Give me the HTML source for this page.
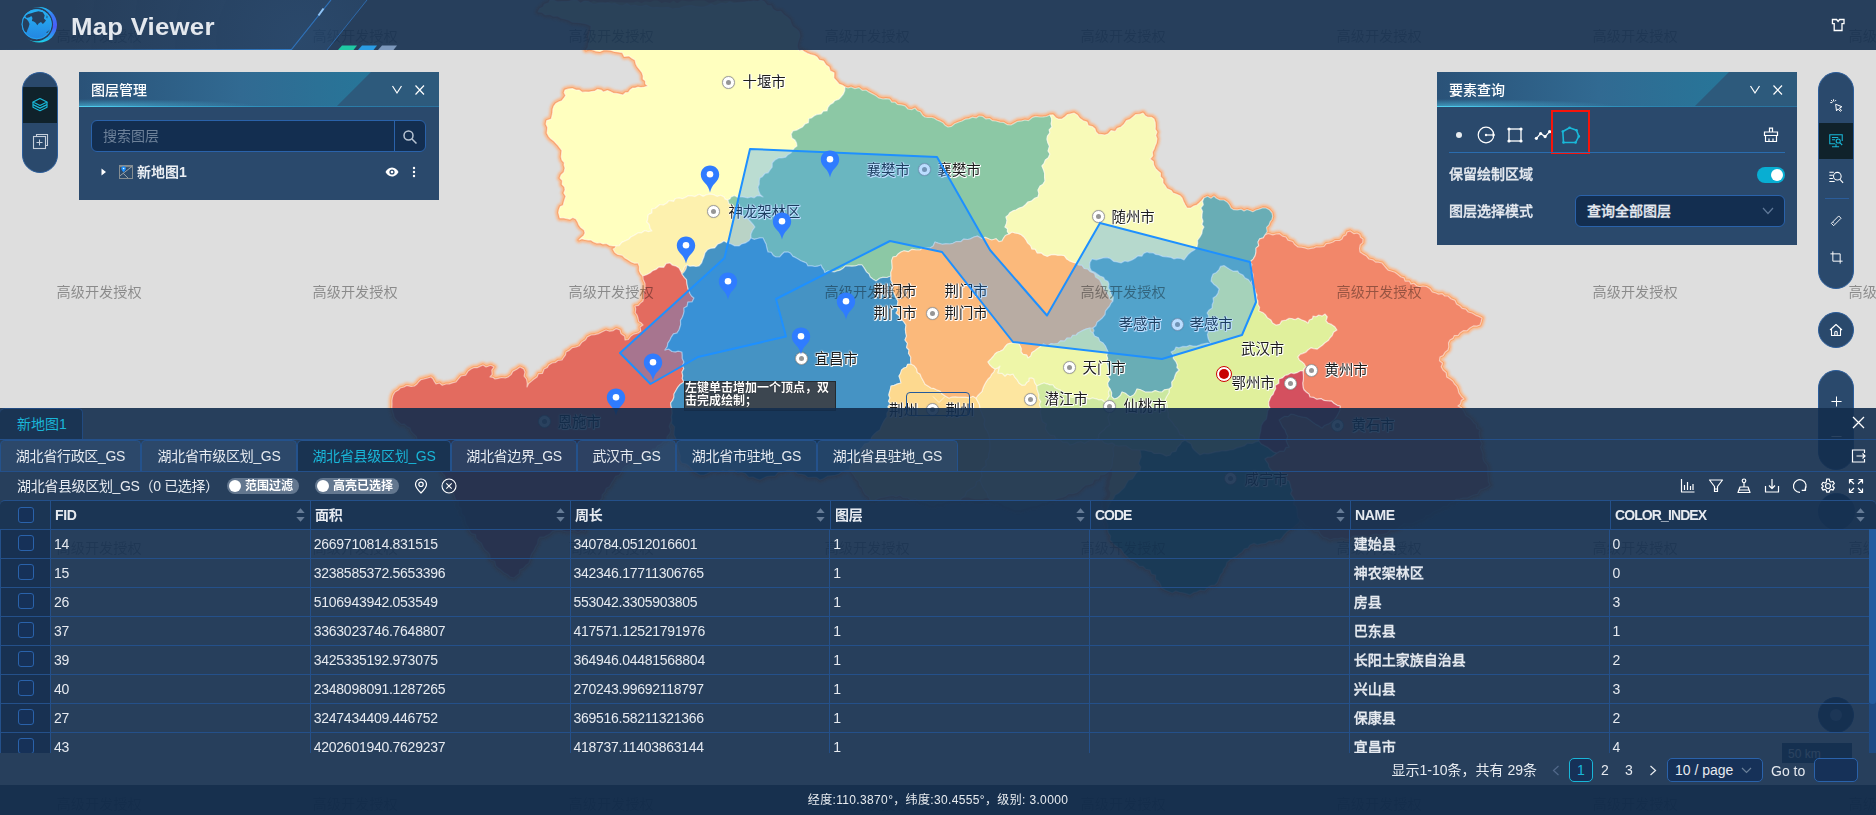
<!DOCTYPE html>
<html lang="zh-CN">
<head>
<meta charset="utf-8">
<title>Map Viewer</title>
<style>
*{box-sizing:border-box}
html,body{margin:0;padding:0}
body{width:1876px;height:815px;overflow:hidden;position:relative;background:#dedede;font-family:"Liberation Sans","Noto Sans CJK SC",sans-serif;font-size:14px;color:#e6eaf0}
svg{display:block}
.map{position:absolute;left:0;top:0}
.abs{position:absolute}
/* watermark */
.wm{position:absolute;font-size:14.2px;line-height:20px;height:20px;color:rgba(0,0,0,.38);white-space:nowrap;letter-spacing:0}
/* city labels */
.city{position:absolute;font-size:14.4px;line-height:18px;height:18px;color:#1c1c1c;white-space:nowrap;text-shadow:1px 1px 0 #fff,1px 0 0 #fff,0 1px 0 #fff,0 0 2px #fff,0 0 2px #fff}
.mk{position:absolute;width:13px;height:13px;border-radius:50%;border:1px solid #a2a2a2;background:#fff;box-shadow:0 0 1px rgba(0,0,0,.3)}
.mk:after{content:"";position:absolute;left:3px;top:3px;width:5px;height:5px;border-radius:50%;background:#969696}
/* header */
.hdr{position:absolute;left:0;top:0;width:1876px;height:50px;background:rgba(19,46,78,.9);overflow:hidden}
.title{position:absolute;left:71px;top:10px;font-size:24px;line-height:30px;font-weight:bold;color:#e4e8ee;white-space:nowrap;letter-spacing:.2px;transform:scaleX(1.075);transform-origin:0 0}
/* panels */
.panel{position:absolute;background:#2a496c}
.phead{position:absolute;left:0;top:0;width:100%;height:35px;overflow:hidden;background:linear-gradient(90deg,#2a5278 0%,#316a92 45%,#25789a 88%,#257c9c 100%)}
.phead .cut{position:absolute;left:257px;top:0;width:120px;height:35px;background:#2d5a7c;transform-origin:0 100%;}
.phead .ln{position:absolute;left:0;bottom:0;width:100%;height:1.5px;background:linear-gradient(90deg,#52d2f2 0%,#3aaad4 25%,#2b84b0 60%,#2a709c 100%)}
.phead .gw{position:absolute;left:0;bottom:1px;width:50%;height:7px;background:radial-gradient(ellipse at 12% 100%,rgba(80,205,240,.55),rgba(80,205,240,0) 70%)}
.phead .t{position:absolute;left:12px;top:8px;font-size:14px;line-height:20px;color:#fff;font-weight:500}
.pill{position:absolute;width:36px;border-radius:18px;background:#2a496c;border:1px solid #2b5d9a;overflow:hidden}
.act{position:absolute;left:0;width:36px;height:36px;background:#10222b}
.circ{position:absolute;width:36px;height:36px;border-radius:50%;background:#2a496c;border:1px solid #2b5d9a}
.b{font-weight:bold}
.m{font-weight:500;-webkit-text-stroke:.3px}
/* bottom */
.bot{position:absolute;left:0;top:408px;width:1876px;height:377px;background:rgba(19,46,78,.9)}
.hl{position:absolute;left:0;width:1876px;height:1px;background:#24508a}
.tab{position:absolute;top:440px;height:31px;border:1px solid #24528c;border-bottom:none;border-radius:5px 5px 0 0;background:rgba(52,88,128,.4);font-size:14px;line-height:30px;text-align:center;color:#e6eaf0;white-space:nowrap;letter-spacing:-.3px}
.tab.on{background:#193351;color:#19b6d8}
.sw{position:absolute;top:478px;height:16px;border-radius:8px;background:rgba(150,165,185,.55);font-size:12px;line-height:17px;font-weight:bold;color:#fff;padding-left:18px;white-space:nowrap}
.sw:before{content:"";position:absolute;left:2px;top:2px;width:12px;height:12px;border-radius:50%;background:#fff}
.th{position:absolute;top:500px;height:29px;font-weight:bold;line-height:31px;padding-left:5px;white-space:nowrap;letter-spacing:-.35px}
.td{position:absolute;height:29px;line-height:30px;padding-left:4px;white-space:nowrap;letter-spacing:-.27px}
.vl{position:absolute;top:500px;width:1px;height:253px;background:#24508a}
.cb{position:absolute;left:18px;width:16px;height:16px;border:1px solid #2a62aa;border-radius:3px;background:#163158}
.srt{position:absolute;top:507.5px;width:9px;height:14px}
.stat{position:absolute;left:0;top:785px;width:1876px;height:30px;background:rgba(16,41,73,.965);font-size:12px;line-height:30px;text-align:center;color:#e8ecf0;letter-spacing:.35px}
.ic{position:absolute}
</style>
</head>
<body>
<div id="root" style="position:absolute;left:0;top:0;width:1876px;height:815px;opacity:.999">
<svg class="map" width="1876" height="815" viewBox="0 0 1876 815">
<defs><filter id="gl" x="-5%" y="-5%" width="110%" height="110%"><feGaussianBlur stdDeviation="1.2"/></filter></defs>
<polygon points="550,0 548.7,2.8 544.2,4.4 543.1,7.0 539.7,8.6 538,12 541.9,12.3 545.4,15.0 550.0,14.5 553.4,16.3 557.5,16.1 560.8,18.1 565,19 569.0,20.2 572.3,22.2 576.5,22.4 579.7,22.7 584.1,23.5 587.4,24.2 591,26 590.7,29.0 589.6,33.3 588.5,36.5 589.5,39.8 588.6,42.9 588.0,47.3 586,50 589.3,48.9 593.5,50.1 596.2,51.1 600.0,51.4 603.5,50.0 606.9,50.0 610.5,50.2 614.4,51.4 618,52 622.3,52.6 624.3,56.5 628.9,55.9 632.0,58.3 635,60 636.0,64.1 637.3,66.6 640,70 642.1,72.7 643.1,75.9 643,79 645.4,80.9 645.5,83.9 648,86 644.4,87.0 641.0,87.6 638,87 635.5,87.9 632.7,88.1 630,90 628.4,92.4 625.4,92.7 623,95 619.4,94.0 616.2,93.4 613,93 610.0,91.5 607.4,90.5 603.3,92.0 601,90 597.4,89.4 595.0,91.1 591.7,91.6 589,92 585.2,91.9 582.2,92.2 579.1,90.1 576,90 572.4,88.6 568.5,88.9 565,90 564.1,92.6 565.8,95.6 564,98 561.8,100.8 559.1,101.7 555.9,103.5 554,106 552.9,109.1 552.7,112.4 552,116 551.2,119.1 546.7,120.6 546,124 547.6,127.3 547.4,130.1 547,133 548.9,136.5 550.7,138.6 554,141 556.2,143.4 558.0,145.3 560,148 561.9,150.4 561.5,154.3 561.2,156.8 562,160 564.3,162.6 564.0,165.1 565,168 564.0,172.2 561.1,174.9 560,178 562.4,180.5 562.1,184.4 564.6,186.9 565,190 563.8,192.9 565.9,196.3 565.0,198.7 564,202 563.2,205.4 560.3,206.6 559,210 558.6,212.7 559.2,215.2 560,218 562.9,217.7 566.7,218.6 569.9,219.2 572.7,217.5 576,219 577.9,222.2 579.0,225.0 580.9,227.6 584.2,229.9 585,233 583.7,235.8 581.4,237.6 579,240 581.8,238.7 584.6,239.4 588.3,240.1 591,240 593.4,241.7 597.0,243.1 600.2,242.8 603,244 606.3,243.6 609.8,245.6 613.0,246.0 616,246 614.8,248.2 613,249 615.0,252.4 617.9,254.4 622.3,255.3 625,258 627.7,259.6 631.4,261.9 634.6,263.2 638,263 639.4,266.6 639.3,270.4 640.7,273.6 643,276 643.1,279.3 645.0,283.6 645.1,287.5 644,291 643.5,294.0 643.5,297.7 643,301 640.4,303.1 638.4,305.4 635,306 635.7,309.0 635.2,312.7 637.0,315.0 638,318 638.7,321.5 640.8,322.7 643,325 640.1,327.0 640.7,331.2 638,333 633.9,334.1 630.9,336.0 628.3,339.5 625,340 624.7,336.2 620.9,333.4 620,330 616.3,328.6 613.2,330.6 609.7,331.2 606,330 602.3,331.7 598.5,333.6 594.6,334.6 591,335 587.2,336.9 585.6,339.8 581.8,342.2 579.2,345.8 576,347 572.2,347.7 569.2,350.4 566,352 565.5,354.8 563.7,357.3 562,360 558.2,360.3 555.3,362.5 552,363 548.8,364.9 547.3,367.5 544.1,369.0 542.4,373.5 538.5,373.6 537,377 533.7,379.3 531.6,381.1 528.6,383.5 527,387 527.3,383.5 526.5,379.1 524.1,376.1 525,372 523.7,368.9 520,367 516.8,369.3 512.8,371.4 511.1,374.6 508,377 505.3,378.0 501.7,377.5 498.2,378.3 495,379 492.9,377.3 490,377 492.2,374.4 491.8,370.1 494,367 490.8,365.3 486.1,367.0 483,365 480.4,366.1 477.1,367.7 473.8,367.7 471,369 468.2,371.0 465.6,375.1 460.9,376.0 458.6,378.7 456,382 453.1,382.6 449.3,383.9 446,384 442.3,385.3 439.5,383.0 436,384 434.3,381.4 432.9,378.7 431,377 427.8,378.0 424,379 420.8,379.7 418.6,381.8 417,384 414.4,386.0 411.1,386.4 406.6,385.4 404,387 400.2,388.0 398.4,390.1 395,392 393.2,394.9 392.3,397.9 391.9,400.7 392,404 391.8,407.4 392.4,411.0 393.4,413.7 394.1,417.0 396,420 398.8,422.3 401.3,424.4 404.3,424.2 407.3,426.9 410,428 410.9,431.2 413.2,433.7 416.4,436.6 417,440 419.1,443.3 422.6,445.5 425.1,448.9 428.1,451.5 430,455 432.9,457.8 433.3,461.5 436.8,463.9 436.7,467.6 440,470 442.2,473.0 444.9,475.9 445.7,479.3 448.5,481.6 449.9,484.8 449.8,489.0 453,492 454.0,495.2 455.6,499.5 458.4,501.9 458.1,506.1 461.1,509.0 461.4,513.8 464.5,516.6 464.9,520.1 465.8,523.8 468,527 469.2,530.7 471.5,533.7 475.4,534.7 476.2,539.1 479.2,541.4 481.4,543.2 483.2,547.3 485,550 487.9,552.2 489.9,555.0 490.2,559.8 494.7,561.2 495.6,565.7 498,568 501.2,570.2 503.9,572.7 507.7,574.7 509.8,576.9 514,578 516.3,575.9 519.3,573.7 519.8,569.8 523.3,568.3 525.9,565.3 528.7,563.4 530,560 530.8,555.8 531.9,553.4 534.2,550.2 535.8,546.5 537.7,543.7 538.0,540.0 540,537 544.1,537.1 547.3,535.4 550.2,533.7 552.4,531.4 556.2,530.4 560,530 563.2,531.0 566.5,531.8 570.1,531.6 574.6,530.6 577.9,532.5 581.5,530.4 585,532 586.1,528.9 589.4,526.0 590.1,523.0 592.3,519.5 592.6,516.6 593.7,512.4 596,510 597.5,507.2 598.1,503.7 599.4,501.0 602.0,498.3 602.2,494.8 605,492 606.3,488.3 609.6,486.8 611.8,482.6 613.6,480.0 615.7,476.3 619.2,475.4 621.7,471.5 622.9,468.6 626,466 629.7,464.2 632.8,460.9 636.9,460.0 640.2,459.2 643.1,456.0 647.1,455.4 650,452 652.7,449.1 655.6,448.9 657.7,445.8 661.1,444.4 663.1,441.8 667,441 667.0,436.9 669.6,434.0 670.9,430.6 669.2,426.5 670.2,423.8 672,420 671.5,423.4 674.6,426.8 674.1,431.5 674.0,435.1 675.8,438.6 676.9,441.6 677.2,444.9 678.2,449.5 679.2,452.7 680.2,455.7 680,460 681.9,463.1 686.5,464.1 688.7,465.7 691.7,468.8 693.5,471.4 696.5,473.1 700,475 704.4,474.9 707.1,473.8 711.2,471.9 714.5,471.1 718.7,472.0 722.7,470.7 726.1,471.7 730,470 734.3,470.7 737.7,473.2 741.3,472.4 745.2,473.5 749.0,477.4 752.9,477.0 756.0,478.6 760,480 763.7,478.0 766.9,476.6 770.8,476.1 775.1,476.1 778.1,472.6 782.2,472.2 786.5,470.7 790,470 793.7,470.6 797.4,473.8 801.2,474.3 805.0,475.2 808.0,477.6 813.0,477.4 816.6,477.4 820,480 823.4,478.8 827.5,476.2 831.3,475.8 835.3,475.3 838.8,474.2 841.8,471.9 846.3,470.2 850,470 852.1,473.0 854.1,475.5 856.1,479.1 858.8,481.3 859.6,485.4 862.1,487.6 863.7,491.8 865.5,494.6 869.0,496.7 870,500 874.1,500.7 878.0,498.4 881.0,497.5 884.9,497.0 888.4,496.1 892.9,495.5 896.1,496.7 900,495 903.2,497.6 907.9,498.0 910.5,499.7 915.6,498.9 919.1,501.8 922.1,501.8 926.7,503.1 930,505 934.0,505.3 937.1,503.2 941.8,504.0 944.5,501.9 948.4,500.7 952.2,500.3 955.9,500.4 960,500 964.3,499.2 968.0,499.0 971.2,499.9 975.2,500.7 978.8,500.7 983.0,500.8 986.4,499.4 990,500 994.1,501.7 998.0,502.0 1000.9,502.9 1004.9,506.0 1008.3,506.8 1012.3,508.7 1016.2,510.0 1020,510 1023.8,508.5 1027.7,507.6 1030.7,506.1 1035.7,505.9 1039.3,504.4 1042.0,502.7 1046.6,502.5 1050,500 1053.9,499.9 1057.6,498.3 1061.9,497.5 1065.8,495.9 1068.3,493.7 1072.9,493.7 1077.1,492.4 1080,490 1083.0,487.0 1085.5,485.1 1089.2,484.5 1092.6,483.1 1094.0,479.2 1098.8,478.8 1100.0,475.0 1104.3,474.6 1107.5,472.2 1110,470 1110.6,474.1 1109.6,477.6 1108.1,480.9 1108.1,484.6 1106.7,488.6 1108.8,492.9 1108.4,496.3 1106.0,499.7 1104.8,503.6 1105.4,507.6 1106.6,511.8 1105,515 1104.9,518.6 1106.6,522.4 1108.0,525.6 1107.6,529.1 1108.3,532.8 1110.6,536.0 1110,540 1112.6,542.5 1114.5,544.9 1117.6,546.9 1121.0,549.0 1122.8,551.6 1125.0,554.8 1127.8,557.5 1130,560 1133.9,561.6 1136.7,563.5 1139.5,566.4 1143.0,566.3 1145.9,569.3 1150,570 1151.4,574.0 1155.5,575.2 1155.5,579.4 1158.4,581.1 1160.4,584.4 1161.6,587.9 1165,590 1168.9,591.5 1172.3,593.0 1175.7,590.9 1179.3,592.3 1182.8,592.8 1186.9,593.9 1190,595 1193.4,592.7 1196.7,591.9 1200.2,590.1 1204.6,590.8 1207.9,587.3 1211.1,585.5 1215,585 1217.4,582.5 1218.8,579.3 1220.4,575.0 1222.9,572.2 1223.4,569.3 1225.9,566.3 1227.0,562.4 1230,560 1232.9,558.1 1236.2,556.6 1239.1,554.1 1241.9,552.3 1244.4,548.8 1247.9,548.2 1250,545 1254.0,543.4 1257.2,544.9 1261.3,543.8 1265.3,543.4 1269.2,541.0 1272.7,541.6 1276.1,539.6 1280,540 1282.1,537.7 1284.3,534.6 1287.1,531.7 1289.5,529.9 1292.7,528.2 1295.1,525.8 1298.7,523.1 1300,520 1302.9,522.0 1304.8,525.0 1308.4,527.0 1312.2,528.2 1314.4,531.1 1318.5,530.8 1320.7,534.7 1323.4,537.3 1326.8,538.1 1330,540 1333.7,538.7 1338.0,538.9 1342.0,537.9 1345.6,539.1 1349.7,539.1 1353.1,536.3 1357.1,535.9 1360.2,536.5 1364.3,535.5 1368.2,537.6 1372.2,534.9 1376.2,534.1 1380,535 1383.4,534.5 1387.4,533.2 1390.4,529.8 1394.4,530.0 1398.1,528.5 1401.1,526.0 1404.2,523.7 1408.2,524.0 1412.7,523.5 1416.1,521.6 1419.4,520.4 1423.8,518.8 1426.2,515.7 1430,515 1432.6,512.4 1436.1,510.7 1440.4,509.4 1443.2,506.5 1447.1,506.7 1449.7,503.0 1453.2,502.3 1456.2,499.4 1460,499 1463.6,498.2 1467.8,498.1 1471.0,496.3 1474,495 1477.5,494.4 1480.2,490.0 1483.8,488.8 1487.2,487.4 1490,485 1488.3,481.4 1488.4,478.4 1487.8,474.2 1488,471 1487.9,467.2 1486.8,464.6 1484.0,461.4 1482.9,458.0 1483.0,453.9 1482,451 1480.5,447.2 1482.1,443.7 1480.4,440.5 1479.8,437.3 1479.1,433.1 1480,430 1476.7,428.1 1476.2,424.5 1473.7,422.7 1472,420 1469.1,417.4 1465.8,415.2 1463.7,410.8 1461.4,407.7 1458,406 1460.5,404.0 1461.3,400.4 1464,399 1461.4,396.5 1458.9,392.9 1458,389 1456.7,386.1 1454.3,383.8 1452.9,381.2 1450,379 1446.7,376.9 1446.2,372.7 1443,370 1441.2,366.7 1442.6,363.2 1439.5,360.7 1440,357 1443.1,355.6 1445.1,352.2 1448,350 1448.8,347.0 1448.5,342.9 1450,340 1453.0,338.4 1454.4,335.6 1458.0,335.7 1460,333 1463.4,330.7 1467.1,330.8 1470,328 1473.5,325.9 1476.8,326.1 1480,325 1481.1,321.9 1482,318 1478.9,316.4 1475.5,315.1 1472,313 1468.3,312.0 1465.8,309.1 1462.1,308.3 1460,306 1456.6,303.9 1455.0,300.4 1450.9,298.7 1448,296 1444.9,296.0 1442.3,293.7 1438.5,294.1 1436,293 1432.3,291.9 1429.7,288.4 1426.4,286.5 1423,286 1419.7,286.6 1416.7,285.7 1414.0,283.2 1411,284 1409.3,281.0 1405.1,281.1 1404.0,277.8 1401,277 1397.6,274.2 1394.9,272.2 1391,271 1388.1,270.2 1386.2,268.0 1384.0,265.4 1382,263 1378.2,262.1 1375.6,262.1 1372.8,259.8 1369,259 1366.1,255.7 1363.1,254.1 1360,252 1359.6,248.6 1360.2,244.9 1362.8,242.6 1363,239 1360.5,237.3 1359.8,234.6 1357,233 1354.0,233.7 1350.1,231.0 1347,232 1346.0,234.9 1343.4,236.1 1342,239 1339.6,240.5 1335.3,240.5 1333,242 1329.5,243.2 1326.2,243.6 1323.9,246.5 1320,247 1316.4,246.8 1314.2,247.8 1310.9,248.3 1308,249 1304.9,247.9 1301.3,247.2 1298,247 1294.5,244.3 1292.7,241.5 1288.0,240.1 1286,237 1282.5,236.1 1279.5,233.7 1276,234 1272.9,234.9 1268.2,233.5 1265,235 1267.2,231.5 1266.6,227.4 1269,225 1270.1,221.9 1271.9,219.5 1272.7,216.3 1272,213 1269.3,209.7 1266,208 1262.9,207.8 1259.1,209.1 1256,210 1252.8,211.7 1250.5,210.8 1247.0,209.5 1244,211 1241.3,209.2 1237.3,209.9 1233.7,209.7 1231,208 1229.3,204.6 1227.4,202.2 1224,200 1219.9,200.0 1216.4,198.3 1214,196 1210.9,198.2 1207.5,196.3 1204,198 1201.7,200.6 1199.3,203.0 1197,205 1193.9,206.0 1190.8,208.1 1187,208 1184.9,204.5 1183.4,201.4 1182,198 1179.9,195.7 1176.6,194.2 1173,193 1171.2,190.5 1166.8,188.5 1165.5,186.2 1163,183 1163.0,179.3 1160.4,176.8 1160.5,173.1 1158,171 1155.6,168.6 1153.7,165.1 1153.3,161.4 1150,159 1152.8,155.8 1152.3,152.1 1153.9,149.3 1155,146 1156.3,143.0 1157.0,138.7 1155.7,135.5 1157,132 1155.2,129.3 1155.4,125.9 1155.2,122.5 1154,119 1151.5,117.3 1147.7,117.2 1145.1,115.7 1143,113 1139.9,114.2 1135.8,114.5 1133,117 1129.9,119.4 1126.5,120.5 1123.8,124.5 1121,127 1117.4,128.2 1115.3,131.4 1111.1,130.6 1108.2,133.8 1105,135 1101.7,134.5 1098.3,134.2 1096,132 1094.9,128.7 1092.2,126.5 1088.3,125.6 1087,122 1083.1,120.8 1079.6,118.3 1077.5,115.3 1074,113 1070.4,113.9 1067.6,114.5 1065.2,116.7 1062,119 1058.3,119.1 1055.7,117.7 1053.0,114.8 1050,115 1046.4,116.5 1043.3,116.8 1040,117 1035.8,116.4 1032.7,117.3 1028.5,120.6 1025,120 1021.8,120.8 1017.7,121.3 1013.9,123.4 1011,125 1007.4,124.7 1003.4,122.3 1000.1,122.2 996,121 992.5,120.7 989.5,118.5 986.0,118.9 982.3,116.3 979,116 976.2,117.9 972.4,117.1 969.1,118.6 965.1,119.2 962,121 958.9,122.0 954.6,123.8 951.5,126.4 948,127 945.0,125.2 943.0,122.8 940.5,121.4 937,120 934.3,118.2 931.7,117.4 927.8,117.4 925,117 922.6,115.2 920.4,111.8 917.3,110.7 915,108 911.8,109.6 908,109 905.1,105.8 901.3,104.8 897.4,104.4 895,102 891.8,102.1 889.7,99.1 885.9,98.6 883,99 878.7,97.9 875.6,95.5 872.5,93.9 868.8,91.9 866,90 862.3,90.3 859.0,87.6 854.9,88.6 851,87 848.1,88.0 845,87 842.5,85.3 839,84 836.1,80.5 833.9,78.1 834.1,72.7 830.2,70.9 829,67 826.0,65.1 823.4,61.0 819.1,60.1 817,57 814.1,55.4 810.4,54.6 807.4,53.4 804.6,51.9 802,50 799.4,50.7 798,49 797.2,45.9 798.0,42.0 799.1,38.8 800,36 799.1,32.0 797.0,29.5 792.6,26.4 791.3,23.8 790.1,19.9 787,17 784.0,15.0 780.8,11.3 776.7,11.5 772.9,9.2 771.2,5.7 767.3,5.5 764.2,1.6 761,0 756.8,-0.6 752.5,1.3 748.6,-1.4 744.9,1.0 741.3,-0.1 737.0,0.4 732.9,-0.1 729.0,-1.0 725.1,-0.5 721.7,0.0 717.7,-1.4 713.5,0.5 709.5,1.3 704.8,-1.1 701.3,-1.0 697.5,-1.3 693.5,-0.8 689.7,-0.1 685.4,-0.6 681.9,-1.2 677.2,1.5 673.7,-1.2 669.5,1.4 665.1,0.3 661.9,1.4 658.0,-1.0 654.1,-1.1 649.8,0.6 645.1,-0.3 641.5,1.5 637.4,-0.3 633.7,0.9 630.0,1.1 625.5,1.0 621.7,0.8 617.5,0.7 613.6,0.3 609.6,-0.2 605.9,1.4 602.1,-0.1 597.4,0.6 593.3,-1.1 590.1,1.1 585.4,-1.2 582.0,1.2 578.1,1.3 573.5,-0.3 569.8,1.1 566.4,1.3 561.4,0.9 557.4,0.0 554.2,-0.1" fill="#fdd98f" stroke="#fbb88a" stroke-width="6.5" stroke-linejoin="round" filter="url(#gl)"/>
<polygon points="550,0 548.7,2.8 544.2,4.4 543.1,7.0 539.7,8.6 538,12 541.9,12.3 545.4,15.0 550.0,14.5 553.4,16.3 557.5,16.1 560.8,18.1 565,19 569.0,20.2 572.3,22.2 576.5,22.4 579.7,22.7 584.1,23.5 587.4,24.2 591,26 590.7,29.0 589.6,33.3 588.5,36.5 589.5,39.8 588.6,42.9 588.0,47.3 586,50 589.3,48.9 593.5,50.1 596.2,51.1 600.0,51.4 603.5,50.0 606.9,50.0 610.5,50.2 614.4,51.4 618,52 622.3,52.6 624.3,56.5 628.9,55.9 632.0,58.3 635,60 636.0,64.1 637.3,66.6 640,70 642.1,72.7 643.1,75.9 643,79 645.4,80.9 645.5,83.9 648,86 644.4,87.0 641.0,87.6 638,87 635.5,87.9 632.7,88.1 630,90 628.4,92.4 625.4,92.7 623,95 619.4,94.0 616.2,93.4 613,93 610.0,91.5 607.4,90.5 603.3,92.0 601,90 597.4,89.4 595.0,91.1 591.7,91.6 589,92 585.2,91.9 582.2,92.2 579.1,90.1 576,90 572.4,88.6 568.5,88.9 565,90 564.1,92.6 565.8,95.6 564,98 561.8,100.8 559.1,101.7 555.9,103.5 554,106 552.9,109.1 552.7,112.4 552,116 551.2,119.1 546.7,120.6 546,124 547.6,127.3 547.4,130.1 547,133 548.9,136.5 550.7,138.6 554,141 556.2,143.4 558.0,145.3 560,148 561.9,150.4 561.5,154.3 561.2,156.8 562,160 564.3,162.6 564.0,165.1 565,168 564.0,172.2 561.1,174.9 560,178 562.4,180.5 562.1,184.4 564.6,186.9 565,190 563.8,192.9 565.9,196.3 565.0,198.7 564,202 563.2,205.4 560.3,206.6 559,210 558.6,212.7 559.2,215.2 560,218 562.9,217.7 566.7,218.6 569.9,219.2 572.7,217.5 576,219 577.9,222.2 579.0,225.0 580.9,227.6 584.2,229.9 585,233 583.7,235.8 581.4,237.6 579,240 581.8,238.7 584.6,239.4 588.3,240.1 591,240 593.4,241.7 597.0,243.1 600.2,242.8 603,244 606.3,243.6 609.8,245.6 613.0,246.0 616,246 614.8,248.2 613,249 615.0,252.4 617.9,254.4 622.3,255.3 625,258 627.7,259.6 631.4,261.9 634.6,263.2 638,263 639.4,266.6 639.3,270.4 640.7,273.6 643,276 643.1,279.3 645.0,283.6 645.1,287.5 644,291 643.5,294.0 643.5,297.7 643,301 640.4,303.1 638.4,305.4 635,306 635.7,309.0 635.2,312.7 637.0,315.0 638,318 638.7,321.5 640.8,322.7 643,325 640.1,327.0 640.7,331.2 638,333 633.9,334.1 630.9,336.0 628.3,339.5 625,340 624.7,336.2 620.9,333.4 620,330 616.3,328.6 613.2,330.6 609.7,331.2 606,330 602.3,331.7 598.5,333.6 594.6,334.6 591,335 587.2,336.9 585.6,339.8 581.8,342.2 579.2,345.8 576,347 572.2,347.7 569.2,350.4 566,352 565.5,354.8 563.7,357.3 562,360 558.2,360.3 555.3,362.5 552,363 548.8,364.9 547.3,367.5 544.1,369.0 542.4,373.5 538.5,373.6 537,377 533.7,379.3 531.6,381.1 528.6,383.5 527,387 527.3,383.5 526.5,379.1 524.1,376.1 525,372 523.7,368.9 520,367 516.8,369.3 512.8,371.4 511.1,374.6 508,377 505.3,378.0 501.7,377.5 498.2,378.3 495,379 492.9,377.3 490,377 492.2,374.4 491.8,370.1 494,367 490.8,365.3 486.1,367.0 483,365 480.4,366.1 477.1,367.7 473.8,367.7 471,369 468.2,371.0 465.6,375.1 460.9,376.0 458.6,378.7 456,382 453.1,382.6 449.3,383.9 446,384 442.3,385.3 439.5,383.0 436,384 434.3,381.4 432.9,378.7 431,377 427.8,378.0 424,379 420.8,379.7 418.6,381.8 417,384 414.4,386.0 411.1,386.4 406.6,385.4 404,387 400.2,388.0 398.4,390.1 395,392 393.2,394.9 392.3,397.9 391.9,400.7 392,404 391.8,407.4 392.4,411.0 393.4,413.7 394.1,417.0 396,420 398.8,422.3 401.3,424.4 404.3,424.2 407.3,426.9 410,428 410.9,431.2 413.2,433.7 416.4,436.6 417,440 419.1,443.3 422.6,445.5 425.1,448.9 428.1,451.5 430,455 432.9,457.8 433.3,461.5 436.8,463.9 436.7,467.6 440,470 442.2,473.0 444.9,475.9 445.7,479.3 448.5,481.6 449.9,484.8 449.8,489.0 453,492 454.0,495.2 455.6,499.5 458.4,501.9 458.1,506.1 461.1,509.0 461.4,513.8 464.5,516.6 464.9,520.1 465.8,523.8 468,527 469.2,530.7 471.5,533.7 475.4,534.7 476.2,539.1 479.2,541.4 481.4,543.2 483.2,547.3 485,550 487.9,552.2 489.9,555.0 490.2,559.8 494.7,561.2 495.6,565.7 498,568 501.2,570.2 503.9,572.7 507.7,574.7 509.8,576.9 514,578 516.3,575.9 519.3,573.7 519.8,569.8 523.3,568.3 525.9,565.3 528.7,563.4 530,560 530.8,555.8 531.9,553.4 534.2,550.2 535.8,546.5 537.7,543.7 538.0,540.0 540,537 544.1,537.1 547.3,535.4 550.2,533.7 552.4,531.4 556.2,530.4 560,530 563.2,531.0 566.5,531.8 570.1,531.6 574.6,530.6 577.9,532.5 581.5,530.4 585,532 586.1,528.9 589.4,526.0 590.1,523.0 592.3,519.5 592.6,516.6 593.7,512.4 596,510 597.5,507.2 598.1,503.7 599.4,501.0 602.0,498.3 602.2,494.8 605,492 606.3,488.3 609.6,486.8 611.8,482.6 613.6,480.0 615.7,476.3 619.2,475.4 621.7,471.5 622.9,468.6 626,466 629.7,464.2 632.8,460.9 636.9,460.0 640.2,459.2 643.1,456.0 647.1,455.4 650,452 652.7,449.1 655.6,448.9 657.7,445.8 661.1,444.4 663.1,441.8 667,441 667.0,436.9 669.6,434.0 670.9,430.6 669.2,426.5 670.2,423.8 672,420 671.5,423.4 674.6,426.8 674.1,431.5 674.0,435.1 675.8,438.6 676.9,441.6 677.2,444.9 678.2,449.5 679.2,452.7 680.2,455.7 680,460 681.9,463.1 686.5,464.1 688.7,465.7 691.7,468.8 693.5,471.4 696.5,473.1 700,475 704.4,474.9 707.1,473.8 711.2,471.9 714.5,471.1 718.7,472.0 722.7,470.7 726.1,471.7 730,470 734.3,470.7 737.7,473.2 741.3,472.4 745.2,473.5 749.0,477.4 752.9,477.0 756.0,478.6 760,480 763.7,478.0 766.9,476.6 770.8,476.1 775.1,476.1 778.1,472.6 782.2,472.2 786.5,470.7 790,470 793.7,470.6 797.4,473.8 801.2,474.3 805.0,475.2 808.0,477.6 813.0,477.4 816.6,477.4 820,480 823.4,478.8 827.5,476.2 831.3,475.8 835.3,475.3 838.8,474.2 841.8,471.9 846.3,470.2 850,470 852.1,473.0 854.1,475.5 856.1,479.1 858.8,481.3 859.6,485.4 862.1,487.6 863.7,491.8 865.5,494.6 869.0,496.7 870,500 874.1,500.7 878.0,498.4 881.0,497.5 884.9,497.0 888.4,496.1 892.9,495.5 896.1,496.7 900,495 903.2,497.6 907.9,498.0 910.5,499.7 915.6,498.9 919.1,501.8 922.1,501.8 926.7,503.1 930,505 934.0,505.3 937.1,503.2 941.8,504.0 944.5,501.9 948.4,500.7 952.2,500.3 955.9,500.4 960,500 964.3,499.2 968.0,499.0 971.2,499.9 975.2,500.7 978.8,500.7 983.0,500.8 986.4,499.4 990,500 994.1,501.7 998.0,502.0 1000.9,502.9 1004.9,506.0 1008.3,506.8 1012.3,508.7 1016.2,510.0 1020,510 1023.8,508.5 1027.7,507.6 1030.7,506.1 1035.7,505.9 1039.3,504.4 1042.0,502.7 1046.6,502.5 1050,500 1053.9,499.9 1057.6,498.3 1061.9,497.5 1065.8,495.9 1068.3,493.7 1072.9,493.7 1077.1,492.4 1080,490 1083.0,487.0 1085.5,485.1 1089.2,484.5 1092.6,483.1 1094.0,479.2 1098.8,478.8 1100.0,475.0 1104.3,474.6 1107.5,472.2 1110,470 1110.6,474.1 1109.6,477.6 1108.1,480.9 1108.1,484.6 1106.7,488.6 1108.8,492.9 1108.4,496.3 1106.0,499.7 1104.8,503.6 1105.4,507.6 1106.6,511.8 1105,515 1104.9,518.6 1106.6,522.4 1108.0,525.6 1107.6,529.1 1108.3,532.8 1110.6,536.0 1110,540 1112.6,542.5 1114.5,544.9 1117.6,546.9 1121.0,549.0 1122.8,551.6 1125.0,554.8 1127.8,557.5 1130,560 1133.9,561.6 1136.7,563.5 1139.5,566.4 1143.0,566.3 1145.9,569.3 1150,570 1151.4,574.0 1155.5,575.2 1155.5,579.4 1158.4,581.1 1160.4,584.4 1161.6,587.9 1165,590 1168.9,591.5 1172.3,593.0 1175.7,590.9 1179.3,592.3 1182.8,592.8 1186.9,593.9 1190,595 1193.4,592.7 1196.7,591.9 1200.2,590.1 1204.6,590.8 1207.9,587.3 1211.1,585.5 1215,585 1217.4,582.5 1218.8,579.3 1220.4,575.0 1222.9,572.2 1223.4,569.3 1225.9,566.3 1227.0,562.4 1230,560 1232.9,558.1 1236.2,556.6 1239.1,554.1 1241.9,552.3 1244.4,548.8 1247.9,548.2 1250,545 1254.0,543.4 1257.2,544.9 1261.3,543.8 1265.3,543.4 1269.2,541.0 1272.7,541.6 1276.1,539.6 1280,540 1282.1,537.7 1284.3,534.6 1287.1,531.7 1289.5,529.9 1292.7,528.2 1295.1,525.8 1298.7,523.1 1300,520 1302.9,522.0 1304.8,525.0 1308.4,527.0 1312.2,528.2 1314.4,531.1 1318.5,530.8 1320.7,534.7 1323.4,537.3 1326.8,538.1 1330,540 1333.7,538.7 1338.0,538.9 1342.0,537.9 1345.6,539.1 1349.7,539.1 1353.1,536.3 1357.1,535.9 1360.2,536.5 1364.3,535.5 1368.2,537.6 1372.2,534.9 1376.2,534.1 1380,535 1383.4,534.5 1387.4,533.2 1390.4,529.8 1394.4,530.0 1398.1,528.5 1401.1,526.0 1404.2,523.7 1408.2,524.0 1412.7,523.5 1416.1,521.6 1419.4,520.4 1423.8,518.8 1426.2,515.7 1430,515 1432.6,512.4 1436.1,510.7 1440.4,509.4 1443.2,506.5 1447.1,506.7 1449.7,503.0 1453.2,502.3 1456.2,499.4 1460,499 1463.6,498.2 1467.8,498.1 1471.0,496.3 1474,495 1477.5,494.4 1480.2,490.0 1483.8,488.8 1487.2,487.4 1490,485 1488.3,481.4 1488.4,478.4 1487.8,474.2 1488,471 1487.9,467.2 1486.8,464.6 1484.0,461.4 1482.9,458.0 1483.0,453.9 1482,451 1480.5,447.2 1482.1,443.7 1480.4,440.5 1479.8,437.3 1479.1,433.1 1480,430 1476.7,428.1 1476.2,424.5 1473.7,422.7 1472,420 1469.1,417.4 1465.8,415.2 1463.7,410.8 1461.4,407.7 1458,406 1460.5,404.0 1461.3,400.4 1464,399 1461.4,396.5 1458.9,392.9 1458,389 1456.7,386.1 1454.3,383.8 1452.9,381.2 1450,379 1446.7,376.9 1446.2,372.7 1443,370 1441.2,366.7 1442.6,363.2 1439.5,360.7 1440,357 1443.1,355.6 1445.1,352.2 1448,350 1448.8,347.0 1448.5,342.9 1450,340 1453.0,338.4 1454.4,335.6 1458.0,335.7 1460,333 1463.4,330.7 1467.1,330.8 1470,328 1473.5,325.9 1476.8,326.1 1480,325 1481.1,321.9 1482,318 1478.9,316.4 1475.5,315.1 1472,313 1468.3,312.0 1465.8,309.1 1462.1,308.3 1460,306 1456.6,303.9 1455.0,300.4 1450.9,298.7 1448,296 1444.9,296.0 1442.3,293.7 1438.5,294.1 1436,293 1432.3,291.9 1429.7,288.4 1426.4,286.5 1423,286 1419.7,286.6 1416.7,285.7 1414.0,283.2 1411,284 1409.3,281.0 1405.1,281.1 1404.0,277.8 1401,277 1397.6,274.2 1394.9,272.2 1391,271 1388.1,270.2 1386.2,268.0 1384.0,265.4 1382,263 1378.2,262.1 1375.6,262.1 1372.8,259.8 1369,259 1366.1,255.7 1363.1,254.1 1360,252 1359.6,248.6 1360.2,244.9 1362.8,242.6 1363,239 1360.5,237.3 1359.8,234.6 1357,233 1354.0,233.7 1350.1,231.0 1347,232 1346.0,234.9 1343.4,236.1 1342,239 1339.6,240.5 1335.3,240.5 1333,242 1329.5,243.2 1326.2,243.6 1323.9,246.5 1320,247 1316.4,246.8 1314.2,247.8 1310.9,248.3 1308,249 1304.9,247.9 1301.3,247.2 1298,247 1294.5,244.3 1292.7,241.5 1288.0,240.1 1286,237 1282.5,236.1 1279.5,233.7 1276,234 1272.9,234.9 1268.2,233.5 1265,235 1267.2,231.5 1266.6,227.4 1269,225 1270.1,221.9 1271.9,219.5 1272.7,216.3 1272,213 1269.3,209.7 1266,208 1262.9,207.8 1259.1,209.1 1256,210 1252.8,211.7 1250.5,210.8 1247.0,209.5 1244,211 1241.3,209.2 1237.3,209.9 1233.7,209.7 1231,208 1229.3,204.6 1227.4,202.2 1224,200 1219.9,200.0 1216.4,198.3 1214,196 1210.9,198.2 1207.5,196.3 1204,198 1201.7,200.6 1199.3,203.0 1197,205 1193.9,206.0 1190.8,208.1 1187,208 1184.9,204.5 1183.4,201.4 1182,198 1179.9,195.7 1176.6,194.2 1173,193 1171.2,190.5 1166.8,188.5 1165.5,186.2 1163,183 1163.0,179.3 1160.4,176.8 1160.5,173.1 1158,171 1155.6,168.6 1153.7,165.1 1153.3,161.4 1150,159 1152.8,155.8 1152.3,152.1 1153.9,149.3 1155,146 1156.3,143.0 1157.0,138.7 1155.7,135.5 1157,132 1155.2,129.3 1155.4,125.9 1155.2,122.5 1154,119 1151.5,117.3 1147.7,117.2 1145.1,115.7 1143,113 1139.9,114.2 1135.8,114.5 1133,117 1129.9,119.4 1126.5,120.5 1123.8,124.5 1121,127 1117.4,128.2 1115.3,131.4 1111.1,130.6 1108.2,133.8 1105,135 1101.7,134.5 1098.3,134.2 1096,132 1094.9,128.7 1092.2,126.5 1088.3,125.6 1087,122 1083.1,120.8 1079.6,118.3 1077.5,115.3 1074,113 1070.4,113.9 1067.6,114.5 1065.2,116.7 1062,119 1058.3,119.1 1055.7,117.7 1053.0,114.8 1050,115 1046.4,116.5 1043.3,116.8 1040,117 1035.8,116.4 1032.7,117.3 1028.5,120.6 1025,120 1021.8,120.8 1017.7,121.3 1013.9,123.4 1011,125 1007.4,124.7 1003.4,122.3 1000.1,122.2 996,121 992.5,120.7 989.5,118.5 986.0,118.9 982.3,116.3 979,116 976.2,117.9 972.4,117.1 969.1,118.6 965.1,119.2 962,121 958.9,122.0 954.6,123.8 951.5,126.4 948,127 945.0,125.2 943.0,122.8 940.5,121.4 937,120 934.3,118.2 931.7,117.4 927.8,117.4 925,117 922.6,115.2 920.4,111.8 917.3,110.7 915,108 911.8,109.6 908,109 905.1,105.8 901.3,104.8 897.4,104.4 895,102 891.8,102.1 889.7,99.1 885.9,98.6 883,99 878.7,97.9 875.6,95.5 872.5,93.9 868.8,91.9 866,90 862.3,90.3 859.0,87.6 854.9,88.6 851,87 848.1,88.0 845,87 842.5,85.3 839,84 836.1,80.5 833.9,78.1 834.1,72.7 830.2,70.9 829,67 826.0,65.1 823.4,61.0 819.1,60.1 817,57 814.1,55.4 810.4,54.6 807.4,53.4 804.6,51.9 802,50 799.4,50.7 798,49 797.2,45.9 798.0,42.0 799.1,38.8 800,36 799.1,32.0 797.0,29.5 792.6,26.4 791.3,23.8 790.1,19.9 787,17 784.0,15.0 780.8,11.3 776.7,11.5 772.9,9.2 771.2,5.7 767.3,5.5 764.2,1.6 761,0 756.8,-0.6 752.5,1.3 748.6,-1.4 744.9,1.0 741.3,-0.1 737.0,0.4 732.9,-0.1 729.0,-1.0 725.1,-0.5 721.7,0.0 717.7,-1.4 713.5,0.5 709.5,1.3 704.8,-1.1 701.3,-1.0 697.5,-1.3 693.5,-0.8 689.7,-0.1 685.4,-0.6 681.9,-1.2 677.2,1.5 673.7,-1.2 669.5,1.4 665.1,0.3 661.9,1.4 658.0,-1.0 654.1,-1.1 649.8,0.6 645.1,-0.3 641.5,1.5 637.4,-0.3 633.7,0.9 630.0,1.1 625.5,1.0 621.7,0.8 617.5,0.7 613.6,0.3 609.6,-0.2 605.9,1.4 602.1,-0.1 597.4,0.6 593.3,-1.1 590.1,1.1 585.4,-1.2 582.0,1.2 578.1,1.3 573.5,-0.3 569.8,1.1 566.4,1.3 561.4,0.9 557.4,0.0 554.2,-0.1" fill="#fdd98f" stroke="#f8a26a" stroke-width="3" stroke-linejoin="round"/>
<polygon points="550,0 554.0,0.3 557.3,1.9 561.3,1.6 565.2,1.5 568.7,1.3 573.3,-0.0 577.5,0.6 580.4,3.2 584.2,1.1 588.2,1.3 592.5,4.0 596.1,3.9 600,3 603.5,3.2 607.6,2.7 611.7,4.0 614.7,3.3 619.4,5.5 622.8,5.8 626.8,3.5 630.6,6.1 634.2,5.0 638.4,6.3 642.1,6.4 646.0,5.0 649.9,7.1 652.7,7.8 656.8,7.3 660.5,7.8 664.6,7.7 668.2,7.4 672.8,9.0 675.9,8.3 680,8 683.4,6.7 688.0,5.9 691.4,5.5 695.5,6.5 699.7,7.1 703.8,7.0 707.5,5.9 711.3,3.9 714.8,6.0 718.5,4.2 721.9,3.2 726.1,4.0 729.5,1.9 734.2,3.5 738.0,2.9 741.9,2.5 745.9,1.8 749.9,1.8 753.7,0.9 757.4,1.7 761,0 764.2,1.6 767.3,5.5 771.2,5.7 772.9,9.2 776.7,11.5 780.8,11.3 784.0,15.0 787,17 790.1,19.9 791.3,23.8 792.6,26.4 797.0,29.5 799.1,32.0 800,36 799.1,38.8 798.0,42.0 797.2,45.9 798,49 799.4,50.7 802,50 804.6,51.9 807.4,53.4 810.4,54.6 814.1,55.4 817,57 819.1,60.1 823.4,61.0 826.0,65.1 829,67 830.2,70.9 834.1,72.7 833.9,78.1 836.1,80.5 839,84 842.5,85.3 845,87 844.8,90.7 843.3,94.2 841,97 839.0,99.2 834.9,100.7 833,103 829.9,104.8 828.0,107.4 827,111 823.3,111.2 821.2,114.0 816.7,114.6 814,116 811.5,118.0 808.9,118.6 808.4,122.8 805,124 802.6,126.9 799.6,128.6 796.9,130.1 793,131 791.2,134.1 792,138 794.9,139.9 796.5,142.9 797,146 794.3,148.1 792.7,150.5 791,153 787.6,155.0 785.7,157.2 782,158 778.7,157.9 775,160 772.3,162.9 772.2,167.2 770,170 768.1,172.8 765.0,173.5 762.4,176.7 760,178 759.3,180.8 759.3,184.2 758,187 758.8,190.9 760.2,194.5 763,197 760.3,195.9 757.1,195.7 754.1,197.8 751,197 747.6,198.0 744.3,197.2 740.7,196.7 737.9,197.6 734.4,195.6 731,197 730.1,198.7 728,200 725.1,199.2 724,197 720.5,195.3 717.2,196.5 713.6,194.7 709.6,194.1 706,195 703.1,196.4 699.2,194.3 695.1,196.6 692,196 688.3,195.7 685.4,197.5 682.4,198.7 679,198 675.4,198.5 673.6,201.4 669.1,200.6 667,203 663.5,205.1 660.0,204.5 657,207 655.0,208.5 652,209 651.9,212.9 648.3,214.8 647.7,218.8 647,222 649.2,224.2 650.2,228.4 652,231 648.4,231.7 644.9,230.6 641.4,233.0 638,233 634.4,235.3 630.9,237.0 628.9,239.2 625,241 621.8,242.4 619.3,245.6 616,246 616,246 613.0,246.0 609.8,245.6 606.3,243.6 603,244 600.2,242.8 597.0,243.1 593.4,241.7 591,240 588.3,240.1 584.6,239.4 581.8,238.7 579,240 581.4,237.6 583.7,235.8 585,233 584.2,229.9 580.9,227.6 579.0,225.0 577.9,222.2 576,219 572.7,217.5 569.9,219.2 566.7,218.6 562.9,217.7 560,218 559.2,215.2 558.6,212.7 559,210 560.3,206.6 563.2,205.4 564,202 565.0,198.7 565.9,196.3 563.8,192.9 565,190 564.6,186.9 562.1,184.4 562.4,180.5 560,178 561.1,174.9 564.0,172.2 565,168 564.0,165.1 564.3,162.6 562,160 561.2,156.8 561.5,154.3 561.9,150.4 560,148 558.0,145.3 556.2,143.4 554,141 550.7,138.6 548.9,136.5 547,133 547.4,130.1 547.6,127.3 546,124 546.7,120.6 551.2,119.1 552,116 552.7,112.4 552.9,109.1 554,106 555.9,103.5 559.1,101.7 561.8,100.8 564,98 565.8,95.6 564.1,92.6 565,90 568.5,88.9 572.4,88.6 576,90 579.1,90.1 582.2,92.2 585.2,91.9 589,92 591.7,91.6 595.0,91.1 597.4,89.4 601,90 603.3,92.0 607.4,90.5 610.0,91.5 613,93 616.2,93.4 619.4,94.0 623,95 625.4,92.7 628.4,92.4 630,90 632.7,88.1 635.5,87.9 638,87 641.0,87.6 644.4,87.0 648,86 645.5,83.9 645.4,80.9 643,79 643.1,75.9 642.1,72.7 640,70 637.3,66.6 636.0,64.1 635,60 632.0,58.3 628.9,55.9 624.3,56.5 622.3,52.6 618,52 614.4,51.4 610.5,50.2 606.9,50.0 603.5,50.0 600.0,51.4 596.2,51.1 593.5,50.1 589.3,48.9 586,50 588.0,47.3 588.6,42.9 589.5,39.8 588.5,36.5 589.6,33.3 590.7,29.0 591,26 587.4,24.2 584.1,23.5 579.7,22.7 576.5,22.4 572.3,22.2 569.0,20.2 565,19 560.8,18.1 557.5,16.1 553.4,16.3 550.0,14.5 545.4,15.0 541.9,12.3 538,12 539.7,8.6 543.1,7.0 544.2,4.4 548.7,2.8" fill="#ffffbf" stroke="rgba(255,255,255,.5)" stroke-width="1.2" stroke-linejoin="round"/>
<polygon points="652,209 655.0,208.5 657,207 660.0,204.5 663.5,205.1 667,203 669.1,200.6 673.6,201.4 675.4,198.5 679,198 682.4,198.7 685.4,197.5 688.3,195.7 692,196 695.1,196.6 699.2,194.3 703.1,196.4 706,195 709.6,194.1 713.6,194.7 717.2,196.5 720.5,195.3 724,197 725.1,199.2 728,200 728.8,203.6 732.7,205.3 733,209 736.6,210.4 739.1,212.7 742.7,215.3 745.6,216.9 748.3,219.0 751,222 753.3,224.6 755,227 752.5,230.4 751.0,234.1 751,238 749.0,240.7 745.4,242.9 741.7,243.9 739,246 734.8,245.9 731.0,244.0 727.8,243.1 724,241 720.8,243.0 717.6,244.3 714.7,247.9 711.0,248.3 707.5,249.8 705,253 703.9,257.0 702.6,260.0 701.7,262.8 699,266 696.0,266.5 693.3,265.9 689.8,266.3 687,265 684.7,266.5 683.4,269.7 682,272 679.9,270.3 679,268 676.2,266.3 672.2,265.1 670,263 666.3,263.5 663.7,267.3 659.0,267.1 656.0,269.4 652.6,270.8 650,273 646.6,274.8 643,276 640.7,273.6 639.3,270.4 639.4,266.6 638,263 634.6,263.2 631.4,261.9 627.7,259.6 625,258 622.3,255.3 617.9,254.4 615.0,252.4 613,249 614.8,248.2 616,246 619.3,245.6 621.8,242.4 625,241 628.9,239.2 630.9,237.0 634.4,235.3 638,233 641.4,233.0 644.9,230.6 648.4,231.7 652,231 650.2,228.4 649.2,224.2 647,222 647.7,218.8 648.3,214.8 651.9,212.9" fill="#fdf1ae" stroke="rgba(255,255,255,.5)" stroke-width="1.2" stroke-linejoin="round"/>
<polygon points="845,87 848.1,88.0 851,87 854.9,88.6 859.0,87.6 862.3,90.3 866,90 868.8,91.9 872.5,93.9 875.6,95.5 878.7,97.9 883,99 885.9,98.6 889.7,99.1 891.8,102.1 895,102 897.4,104.4 901.3,104.8 905.1,105.8 908,109 911.8,109.6 915,108 917.3,110.7 920.4,111.8 922.6,115.2 925,117 927.8,117.4 931.7,117.4 934.3,118.2 937,120 940.5,121.4 943.0,122.8 945.0,125.2 948,127 951.5,126.4 954.6,123.8 958.9,122.0 962,121 965.1,119.2 969.1,118.6 972.4,117.1 976.2,117.9 979,116 982.3,116.3 986.0,118.9 989.5,118.5 992.5,120.7 996,121 1000.1,122.2 1003.4,122.3 1007.4,124.7 1011,125 1013.9,123.4 1017.7,121.3 1021.8,120.8 1025,120 1028.5,120.6 1032.7,117.3 1035.8,116.4 1040,117 1043.3,116.8 1046.4,116.5 1050,115 1051.5,118.0 1051.7,120.6 1051.2,123.8 1052,127 1049.2,129.8 1049.9,132.8 1047.5,136.1 1047,139 1047.9,142.8 1049.5,146.2 1048.1,151.0 1050,154 1048.4,157.7 1045.4,159.9 1044.2,163.3 1042,166 1043.7,170.0 1044.6,173.1 1044.6,177.2 1045,181 1042.8,184.5 1040.1,186.1 1038,190 1038.9,193.6 1038,197 1034.8,198.2 1031.5,201.1 1028,202 1025.8,204.5 1022.6,207.2 1019.5,208.0 1016,210 1013.0,210.9 1009.9,212.7 1008.5,214.9 1006,217 1007.0,220.3 1006.5,223.4 1005,227 1007.5,228.8 1007.4,231.5 1009,234 1005.4,235.5 1003.8,237.8 1002,241 998.9,241.6 996.0,238.7 991.7,240.0 989,239 985.2,237.4 981.5,238.4 977.5,236.1 974,237 970.3,238.9 967.8,239.5 963.6,239.2 960.8,241.7 956.5,241.5 953.0,243.3 950,244 945.8,243.8 942.1,244.3 938.1,243.1 935,242 933.2,246.1 930,248 926.8,248.1 922.5,248.1 920.1,250.0 916,250 912.1,249.3 908.2,251.7 904.1,250.8 901,252 898.1,254.1 896.2,256.3 893,257 891.7,260.6 892.1,265.1 892.3,268.3 890.8,272.6 891,276 887.1,277.5 882.8,277.4 879.8,278.3 876,281 873.1,279.3 870.2,277.1 869,274 866.4,271.9 864.2,268.1 862,265 858.9,264.8 855.2,266.0 852.0,266.2 849,266 845.3,266.1 843.2,268.2 840.0,270.2 837,271 834.3,271.8 830.6,271.3 827.4,271.2 825,273 823.9,269.9 822.2,267.7 821,265 817.6,266.2 814.9,266.5 811.2,265.8 808,266 806.3,263.0 803.7,261.9 800.8,260.8 798,259 795.3,257.4 792.9,256.4 790.5,253.3 788,252 784.1,252.2 782.2,254.0 779.7,256.8 776,257 773.2,255.4 771.2,252.3 768,252 766.9,248.3 766.1,244.3 764.7,241.6 763,238 760.3,237.8 757.4,238.5 754.3,239.4 751,238 751,238 751.0,234.1 752.5,230.4 755,227 753.3,224.6 751,222 748.3,219.0 745.6,216.9 742.7,215.3 739.1,212.7 736.6,210.4 733,209 732.7,205.3 728.8,203.6 728,200 730.1,198.7 731,197 734.4,195.6 737.9,197.6 740.7,196.7 744.3,197.2 747.6,198.0 751,197 754.1,197.8 757.1,195.7 760.3,195.9 763,197 760.2,194.5 758.8,190.9 758,187 759.3,184.2 759.3,180.8 760,178 762.4,176.7 765.0,173.5 768.1,172.8 770,170 772.2,167.2 772.3,162.9 775,160 778.7,157.9 782,158 785.7,157.2 787.6,155.0 791,153 792.7,150.5 794.3,148.1 797,146 796.5,142.9 794.9,139.9 792,138 791.2,134.1 793,131 796.9,130.1 799.6,128.6 802.6,126.9 805,124 808.4,122.8 808.9,118.6 811.5,118.0 814,116 816.7,114.6 821.2,114.0 823.3,111.2 827,111 828.0,107.4 829.9,104.8 833,103 834.9,100.7 839.0,99.2 841,97 843.3,94.2 844.8,90.7 845,87" fill="#8cc8a5" stroke="rgba(255,255,255,.5)" stroke-width="1.2" stroke-linejoin="round"/>
<polygon points="643,276 643.1,279.3 645.0,283.6 645.1,287.5 644,291 643.5,294.0 643.5,297.7 643,301 640.4,303.1 638.4,305.4 635,306 635.7,309.0 635.2,312.7 637.0,315.0 638,318 638.7,321.5 640.8,322.7 643,325 640.1,327.0 640.7,331.2 638,333 633.9,334.1 630.9,336.0 628.3,339.5 625,340 624.7,336.2 620.9,333.4 620,330 616.3,328.6 613.2,330.6 609.7,331.2 606,330 602.3,331.7 598.5,333.6 594.6,334.6 591,335 587.2,336.9 585.6,339.8 581.8,342.2 579.2,345.8 576,347 572.2,347.7 569.2,350.4 566,352 565.5,354.8 563.7,357.3 562,360 558.2,360.3 555.3,362.5 552,363 548.8,364.9 547.3,367.5 544.1,369.0 542.4,373.5 538.5,373.6 537,377 533.7,379.3 531.6,381.1 528.6,383.5 527,387 527.3,383.5 526.5,379.1 524.1,376.1 525,372 523.7,368.9 520,367 516.8,369.3 512.8,371.4 511.1,374.6 508,377 505.3,378.0 501.7,377.5 498.2,378.3 495,379 492.9,377.3 490,377 492.2,374.4 491.8,370.1 494,367 490.8,365.3 486.1,367.0 483,365 480.4,366.1 477.1,367.7 473.8,367.7 471,369 468.2,371.0 465.6,375.1 460.9,376.0 458.6,378.7 456,382 453.1,382.6 449.3,383.9 446,384 442.3,385.3 439.5,383.0 436,384 434.3,381.4 432.9,378.7 431,377 427.8,378.0 424,379 420.8,379.7 418.6,381.8 417,384 414.4,386.0 411.1,386.4 406.6,385.4 404,387 400.2,388.0 398.4,390.1 395,392 393.2,394.9 392.3,397.9 391.9,400.7 392,404 391.8,407.4 392.4,411.0 393.4,413.7 394.1,417.0 396,420 398.8,422.3 401.3,424.4 404.3,424.2 407.3,426.9 410,428 410.9,431.2 413.2,433.7 416.4,436.6 417,440 419.1,443.3 422.6,445.5 425.1,448.9 428.1,451.5 430,455 432.9,457.8 433.3,461.5 436.8,463.9 436.7,467.6 440,470 442.2,473.0 444.9,475.9 445.7,479.3 448.5,481.6 449.9,484.8 449.8,489.0 453,492 454.0,495.2 455.6,499.5 458.4,501.9 458.1,506.1 461.1,509.0 461.4,513.8 464.5,516.6 464.9,520.1 465.8,523.8 468,527 469.2,530.7 471.5,533.7 475.4,534.7 476.2,539.1 479.2,541.4 481.4,543.2 483.2,547.3 485,550 487.9,552.2 489.9,555.0 490.2,559.8 494.7,561.2 495.6,565.7 498,568 501.2,570.2 503.9,572.7 507.7,574.7 509.8,576.9 514,578 516.3,575.9 519.3,573.7 519.8,569.8 523.3,568.3 525.9,565.3 528.7,563.4 530,560 530.8,555.8 531.9,553.4 534.2,550.2 535.8,546.5 537.7,543.7 538.0,540.0 540,537 544.1,537.1 547.3,535.4 550.2,533.7 552.4,531.4 556.2,530.4 560,530 563.2,531.0 566.5,531.8 570.1,531.6 574.6,530.6 577.9,532.5 581.5,530.4 585,532 586.1,528.9 589.4,526.0 590.1,523.0 592.3,519.5 592.6,516.6 593.7,512.4 596,510 597.5,507.2 598.1,503.7 599.4,501.0 602.0,498.3 602.2,494.8 605,492 606.3,488.3 609.6,486.8 611.8,482.6 613.6,480.0 615.7,476.3 619.2,475.4 621.7,471.5 622.9,468.6 626,466 629.7,464.2 632.8,460.9 636.9,460.0 640.2,459.2 643.1,456.0 647.1,455.4 650,452 652.7,449.1 655.6,448.9 657.7,445.8 661.1,444.4 663.1,441.8 667,441 667.0,436.9 669.6,434.0 670.9,430.6 669.2,426.5 670.2,423.8 672,420 671.3,417.0 672.2,413.3 671.9,409.0 671,406 670.7,402.9 672.8,400.2 674.0,397.0 674,394 676.1,390.2 677.7,387.4 680.4,384.2 684,382 682.3,378.7 682.7,375.6 682,372 683.8,368.6 682.6,365.6 684,362 682.3,358.6 682.3,355.4 682,352 678.2,351.2 675.4,351.8 672.1,351.5 668.6,349.0 665,350 667.3,346.6 667.9,343.2 670,340 671.3,337.1 673.5,333.9 676.9,333.1 679,330 680.1,326.8 680.7,324.5 680.5,320.4 682,318 683.2,315.0 684.1,311.7 684,308 687.1,306.3 687.9,302.2 692.2,301.8 694,298 691.6,296.0 690.0,293.5 689,291 687.8,288.0 687,284 686.5,279.6 684.4,277.3 682,274 680.6,271.0 679,268 676.2,266.3 672.2,265.1 670,263 666.3,263.5 663.7,267.3 659.0,267.1 656.0,269.4 652.6,270.8 650,273 646.6,274.8" fill="#e36b5f" stroke="rgba(255,255,255,.5)" stroke-width="1.2" stroke-linejoin="round"/>
<polygon points="682,274 684.6,271.3 686.1,268.6 687,265 689.8,266.3 693.3,265.9 696.0,266.5 699,266 701.7,262.8 702.6,260.0 703.9,257.0 705,253 707.5,249.8 711.0,248.3 714.7,247.9 717.6,244.3 720.8,243.0 724,241 727.8,243.1 731.0,244.0 734.8,245.9 739,246 741.7,243.9 745.4,242.9 749.0,240.7 751,238 754.3,239.4 757.4,238.5 760.3,237.8 763,238 764.7,241.6 766.1,244.3 766.9,248.3 768,252 771.2,252.3 773.2,255.4 776,257 779.7,256.8 782.2,254.0 784.1,252.2 788,252 790.5,253.3 792.9,256.4 795.3,257.4 798,259 800.8,260.8 803.7,261.9 806.3,263.0 808,266 811.2,265.8 814.9,266.5 817.6,266.2 821,265 822.2,267.7 823.9,269.9 825,273 827.4,271.2 830.6,271.3 834.3,271.8 837,271 840.0,270.2 843.2,268.2 845.3,266.1 849,266 852.0,266.2 855.2,266.0 858.9,264.8 862,265 864.2,268.1 866.4,271.9 869,274 870.2,277.1 873.1,279.3 876,281 879.8,278.3 882.8,277.4 887.1,277.5 891,276 890.9,279.7 892.5,283.3 892.9,287.1 893,291 894.5,294.2 895.8,297.3 898,301 897.6,304.1 896.9,306.9 897.8,310.3 896,313 899.3,315.8 900.6,318.7 903.6,321.4 906,325 905.4,329.1 905.7,332.7 906.5,336.1 905,340 907.5,343.4 906.6,347.5 909,350 908.5,353.3 910.8,357.2 910.6,360.7 911,364 907.7,364.3 906.4,367.2 904,368 901.6,369.9 900.5,373.6 899,376 900.3,379.8 901,383 897.6,383.9 894.2,385.4 891,386 890.5,389.0 889.6,391.9 888.8,395.0 890,398 888.5,401.3 890.7,403.9 888.0,406.7 889,410 887.0,413.4 887.1,416.8 884.6,420.0 883.0,423.1 881.2,426.8 880,430 876.9,431.9 874.2,434.5 871.6,437.3 870.9,440.5 868.6,443.2 864.7,444.1 862.4,447.3 860,450 859.0,454.0 856.4,456.8 855.2,459.8 853.3,463.0 850.1,466.4 850,470 846.3,470.2 841.8,471.9 838.8,474.2 835.3,475.3 831.3,475.8 827.5,476.2 823.4,478.8 820,480 816.6,477.4 813.0,477.4 808.0,477.6 805.0,475.2 801.2,474.3 797.4,473.8 793.7,470.6 790,470 786.5,470.7 782.2,472.2 778.1,472.6 775.1,476.1 770.8,476.1 766.9,476.6 763.7,478.0 760,480 756.0,478.6 752.9,477.0 749.0,477.4 745.2,473.5 741.3,472.4 737.7,473.2 734.3,470.7 730,470 726.1,471.7 722.7,470.7 718.7,472.0 714.5,471.1 711.2,471.9 707.1,473.8 704.4,474.9 700,475 696.5,473.1 693.5,471.4 691.7,468.8 688.7,465.7 686.5,464.1 681.9,463.1 680,460 680.2,455.7 679.2,452.7 678.2,449.5 677.2,444.9 676.9,441.6 675.8,438.6 674.0,435.1 674.1,431.5 674.6,426.8 671.5,423.4 672,420 671.3,417.0 672.2,413.3 671.9,409.0 671,406 670.7,402.9 672.8,400.2 674.0,397.0 674,394 676.1,390.2 677.7,387.4 680.4,384.2 684,382 682.3,378.7 682.7,375.6 682,372 683.8,368.6 682.6,365.6 684,362 682.3,358.6 682.3,355.4 682,352 678.2,351.2 675.4,351.8 672.1,351.5 668.6,349.0 665,350 667.3,346.6 667.9,343.2 670,340 671.3,337.1 673.5,333.9 676.9,333.1 679,330 680.1,326.8 680.7,324.5 680.5,320.4 682,318 683.2,315.0 684.1,311.7 684,308 687.1,306.3 687.9,302.2 692.2,301.8 694,298 691.6,296.0 690.0,293.5 689,291 687.8,288.0 687,284 686.5,279.6 684.4,277.3 682,274" fill="#4593c4" stroke="rgba(255,255,255,.5)" stroke-width="1.2" stroke-linejoin="round"/>
<polygon points="911,364 914.2,365.8 916.5,368.7 917.4,372.5 920,374 921.3,377.2 923.0,380.2 925.1,384.2 928,386 931.1,388.0 933.6,388.3 936.5,389.7 940,391 942.3,394.1 945.7,396.2 949,398 952.5,396.9 955.6,396.8 958.5,397.2 962,397 965.5,397.1 969.4,397.8 972.9,396.3 976,398 977.6,401.1 979.4,404.6 980.3,409.6 981.9,413.0 983.4,416.7 985,420 984.1,423.8 985.1,427.8 987.5,431.4 988.8,434.5 989.6,438.7 990.0,442.6 990.1,446.2 990,450 988.9,453.9 988.6,457.8 985.8,460.8 986.3,465.8 982.5,468.8 981.2,472.2 982.2,475.9 980,480 976.6,481.7 975.6,486.0 972.6,488.0 969.9,489.4 966.5,491.7 965.1,495.8 962.4,497.5 960,500 955.9,500.4 952.2,500.3 948.4,500.7 944.5,501.9 941.8,504.0 937.1,503.2 934.0,505.3 930,505 926.7,503.1 922.1,501.8 919.1,501.8 915.6,498.9 910.5,499.7 907.9,498.0 903.2,497.6 900,495 896.1,496.7 892.9,495.5 888.4,496.1 884.9,497.0 881.0,497.5 878.0,498.4 874.1,500.7 870,500 869.0,496.7 865.5,494.6 863.7,491.8 862.1,487.6 859.6,485.4 858.8,481.3 856.1,479.1 854.1,475.5 852.1,473.0 850,470 850.1,466.4 853.3,463.0 855.2,459.8 856.4,456.8 859.0,454.0 860,450 862.4,447.3 864.7,444.1 868.6,443.2 870.9,440.5 871.6,437.3 874.2,434.5 876.9,431.9 880,430 881.2,426.8 883.0,423.1 884.6,420.0 887.1,416.8 887.0,413.4 889,410 888.0,406.7 890.7,403.9 888.5,401.3 890,398 888.8,395.0 889.6,391.9 890.5,389.0 891,386 894.2,385.4 897.6,383.9 901,383 900.3,379.8 899,376 900.5,373.6 901.6,369.9 904,368 906.4,367.2 907.7,364.3" fill="#fdd98f" stroke="rgba(255,255,255,.5)" stroke-width="1.2" stroke-linejoin="round"/>
<polygon points="976,398 977.8,395.5 979.9,393.4 981.9,391.5 983,388 984.2,385.3 986.1,381.8 988,379 990.2,377.0 991.7,374.1 993.7,372.1 995,369 997.8,367.9 1000,366 998.8,369.3 998,373 1002.3,373.4 1005,376 1007.2,374.0 1010.1,374.9 1013,374 1014.6,376.8 1017.2,379.9 1019,383 1021.8,385.1 1025,385 1026.5,382.6 1028.8,381.1 1029,378 1031.6,377.8 1034,379 1034.6,382.4 1037,386 1037.1,389.3 1038.0,391.9 1039,395 1038.7,398.4 1040.8,401.6 1039.4,404.8 1041.2,408.5 1040.2,411.6 1041,415 1041.6,418.9 1042.6,421.8 1046.6,424.0 1045.4,428.5 1047.6,432.0 1050,435 1054.3,435.5 1056.0,438.7 1059.6,439.6 1063.2,442.2 1067.4,442.2 1070,445 1074.0,443.7 1077.0,442.2 1080.9,441.5 1084.5,443.3 1087.5,441.5 1091.3,439.4 1095,440 1098.9,440.3 1102.2,440.5 1104.4,442.8 1108.2,443.9 1112.1,442.8 1115,445 1112.9,448.0 1113.3,452.4 1113.7,455.4 1112.4,459.3 1112.4,463.0 1111.9,466.2 1110,470 1107.5,472.2 1104.3,474.6 1100.0,475.0 1098.8,478.8 1094.0,479.2 1092.6,483.1 1089.2,484.5 1085.5,485.1 1083.0,487.0 1080,490 1077.1,492.4 1072.9,493.7 1068.3,493.7 1065.8,495.9 1061.9,497.5 1057.6,498.3 1053.9,499.9 1050,500 1046.6,502.5 1042.0,502.7 1039.3,504.4 1035.7,505.9 1030.7,506.1 1027.7,507.6 1023.8,508.5 1020,510 1016.2,510.0 1012.3,508.7 1008.3,506.8 1004.9,506.0 1000.9,502.9 998.0,502.0 994.1,501.7 990,500 988.1,497.1 987.1,493.2 984.8,490.2 983.0,487.1 981.4,484.0 980,480 982.2,475.9 981.2,472.2 982.5,468.8 986.3,465.8 985.8,460.8 988.6,457.8 988.9,453.9 990,450 990.1,446.2 990.0,442.6 989.6,438.7 988.8,434.5 987.5,431.4 985.1,427.8 984.1,423.8 985,420 983.4,416.7 981.9,413.0 980.3,409.6 979.4,404.6 977.6,401.1" fill="#fde6a0" stroke="rgba(255,255,255,.5)" stroke-width="1.2" stroke-linejoin="round"/>
<polygon points="891,276 890.9,279.7 892.5,283.3 892.9,287.1 893,291 894.5,294.2 895.8,297.3 898,301 897.6,304.1 896.9,306.9 897.8,310.3 896,313 899.3,315.8 900.6,318.7 903.6,321.4 906,325 905.4,329.1 905.7,332.7 906.5,336.1 905,340 907.5,343.4 906.6,347.5 909,350 908.5,353.3 910.8,357.2 910.6,360.7 911,364 914.2,365.8 916.5,368.7 917.4,372.5 920,374 921.3,377.2 923.0,380.2 925.1,384.2 928,386 931.1,388.0 933.6,388.3 936.5,389.7 940,391 942.3,394.1 945.7,396.2 949,398 952.5,396.9 955.6,396.8 958.5,397.2 962,397 965.5,397.1 969.4,397.8 972.9,396.3 976,398 977.8,395.5 979.9,393.4 981.9,391.5 983,388 984.2,385.3 986.1,381.8 988,379 990.2,377.0 991.7,374.1 993.7,372.1 995,369 992.3,367.2 989.9,364.9 988,362 990.8,359.2 993.3,356.5 995,354 997.2,352.2 1000.1,351.3 1003.0,349.9 1005,347 1007.2,344.3 1009.9,343.4 1013,343 1015.7,343.4 1019,344 1020.2,346.3 1021.2,348.8 1021,352 1023.0,354.3 1026.8,355.2 1028,358 1030.8,355.9 1032.0,352.5 1034.5,351.1 1037,349 1039.3,347.6 1041,346 1043.6,344.1 1047.7,346.0 1050.9,343.7 1054,344 1057.9,343.5 1060.5,340.8 1064.5,341.1 1067.2,338.0 1071,338 1072.7,335.3 1076.3,335.0 1078,333 1080.8,331.5 1083.6,330.1 1086.6,328.9 1090,328 1093,328 1093,328 1095.9,325.7 1097.1,322.2 1100,320 1102.6,317.7 1105.1,314.6 1105.5,311.1 1108,308 1109.7,306.1 1110.9,303.4 1113,301 1113.3,297.2 1111.0,293.8 1110.8,291.3 1108.5,288.2 1109,284 1107.9,281.2 1105.0,279.9 1103.5,277.2 1100,276 1096.5,274.7 1093.9,273.0 1090.1,271.4 1088,269 1084.3,268.5 1082.0,265.1 1078.9,265.0 1076,263 1073.1,262.1 1069.3,260.6 1066.9,259.1 1064.4,255.7 1061,255 1057.9,255.2 1054.3,254.4 1051.0,254.6 1047.2,256.3 1044,255 1041.2,252.7 1037.3,253.0 1035.3,249.2 1032,249 1030.7,245.6 1027.7,242.9 1026.1,239.8 1024,237 1021.4,234.7 1018.9,233.6 1015.1,232.8 1012,232 1009,234 1005.4,235.5 1003.8,237.8 1002,241 998.9,241.6 996.0,238.7 991.7,240.0 989,239 985.2,237.4 981.5,238.4 977.5,236.1 974,237 970.3,238.9 967.8,239.5 963.6,239.2 960.8,241.7 956.5,241.5 953.0,243.3 950,244 945.8,243.8 942.1,244.3 938.1,243.1 935,242 933.2,246.1 930,248 926.8,248.1 922.5,248.1 920.1,250.0 916,250 912.1,249.3 908.2,251.7 904.1,250.8 901,252 898.1,254.1 896.2,256.3 893,257 891.7,260.6 892.1,265.1 892.3,268.3 890.8,272.6 891,276" fill="#fbb97b" stroke="rgba(255,255,255,.5)" stroke-width="1.2" stroke-linejoin="round"/>
<polygon points="1050,115 1053.0,114.8 1055.7,117.7 1058.3,119.1 1062,119 1065.2,116.7 1067.6,114.5 1070.4,113.9 1074,113 1077.5,115.3 1079.6,118.3 1083.1,120.8 1087,122 1088.3,125.6 1092.2,126.5 1094.9,128.7 1096,132 1098.3,134.2 1101.7,134.5 1105,135 1108.2,133.8 1111.1,130.6 1115.3,131.4 1117.4,128.2 1121,127 1123.8,124.5 1126.5,120.5 1129.9,119.4 1133,117 1135.8,114.5 1139.9,114.2 1143,113 1145.1,115.7 1147.7,117.2 1151.5,117.3 1154,119 1155.2,122.5 1155.4,125.9 1155.2,129.3 1157,132 1155.7,135.5 1157.0,138.7 1156.3,143.0 1155,146 1153.9,149.3 1152.3,152.1 1152.8,155.8 1150,159 1153.3,161.4 1153.7,165.1 1155.6,168.6 1158,171 1160.5,173.1 1160.4,176.8 1163.0,179.3 1163,183 1165.5,186.2 1166.8,188.5 1171.2,190.5 1173,193 1176.6,194.2 1179.9,195.7 1182,198 1183.4,201.4 1184.9,204.5 1187,208 1190.8,208.1 1193.9,206.0 1197,205 1199.3,203.0 1201.7,200.6 1204,198 1204,198 1202.6,201.3 1203.4,204.8 1201,208 1202.6,211.3 1202.1,214.2 1202,218 1203.1,221.2 1202.0,224.3 1204,227 1202.4,230.0 1201.9,233.5 1200,237 1197.5,240.3 1197.7,243.4 1197,247 1194.4,249.9 1191,252 1188.1,254.6 1185.9,257.4 1184,260 1180.9,258.5 1177.1,258.1 1174,259 1171.0,257.4 1166.2,256.8 1162.5,256.4 1159,255 1155.7,254.4 1153.4,253.0 1149.7,252.8 1147,252 1143.6,253.5 1141.9,256.2 1138.0,255.9 1134.7,258.5 1132,260 1127.9,261.6 1124.8,261.0 1121.0,263.0 1117,262 1113.6,261.4 1110.2,258.5 1106.7,257.6 1103,258 1099.7,258.9 1096.3,259.8 1092,259 1090.1,262.1 1089.7,264.5 1090,268 1091.9,271.0 1094.6,273.7 1095.5,277.0 1099.5,279.7 1101.0,282.8 1102.6,286.5 1104.5,289.5 1106.6,291.6 1108.7,295.4 1109.6,298.7 1113,301 1113.3,297.2 1111.0,293.8 1110.8,291.3 1108.5,288.2 1109,284 1107.9,281.2 1105.0,279.9 1103.5,277.2 1100,276 1096.5,274.7 1093.9,273.0 1090.1,271.4 1088,269 1084.3,268.5 1082.0,265.1 1078.9,265.0 1076,263 1073.1,262.1 1069.3,260.6 1066.9,259.1 1064.4,255.7 1061,255 1057.9,255.2 1054.3,254.4 1051.0,254.6 1047.2,256.3 1044,255 1041.2,252.7 1037.3,253.0 1035.3,249.2 1032,249 1030.7,245.6 1027.7,242.9 1026.1,239.8 1024,237 1021.4,234.7 1018.9,233.6 1015.1,232.8 1012,232 1009,234 1009,234 1007.4,231.5 1007.5,228.8 1005,227 1006.5,223.4 1007.0,220.3 1006,217 1008.5,214.9 1009.9,212.7 1013.0,210.9 1016,210 1019.5,208.0 1022.6,207.2 1025.8,204.5 1028,202 1031.5,201.1 1034.8,198.2 1038,197 1038.9,193.6 1038,190 1040.1,186.1 1042.8,184.5 1045,181 1044.6,177.2 1044.6,173.1 1043.7,170.0 1042,166 1044.2,163.3 1045.4,159.9 1048.4,157.7 1050,154 1048.1,151.0 1049.5,146.2 1047.9,142.8 1047,139 1047.5,136.1 1049.9,132.8 1049.2,129.8 1052,127 1051.2,123.8 1051.7,120.6 1051.5,118.0 1050,115" fill="#f8fab8" stroke="rgba(255,255,255,.5)" stroke-width="1.2" stroke-linejoin="round"/>
<polygon points="1251,283 1248.4,279.6 1245.0,277.9 1243,275 1239.3,273.3 1237.6,270.9 1233.0,271.1 1230.1,269.4 1227.4,267.8 1224,265.5 1220.4,266.4 1219.0,269.6 1216.3,272.5 1213,274 1211.6,277.5 1211,281 1213.7,284.2 1216.1,286.0 1219,289 1217.9,293.2 1216.0,296.1 1213,298 1213.5,301.6 1212.2,304.4 1212,308 1208.8,310.3 1207,313 1208.5,315.6 1208.6,318.8 1209.6,322.0 1209,325 1208.2,328.2 1208.2,331.9 1207.4,334.4 1208,338 1209.1,340.7 1211,344 1207.5,343.1 1203.3,343.9 1200.5,344.7 1196.8,346.1 1193,346 1189.8,345.3 1186.5,346.6 1182.9,346.4 1179.0,347.8 1176,347 1174.5,350.3 1171,352 1173.0,354.9 1173.4,358.6 1176,362 1177.2,365.0 1176.8,367.6 1179,370 1176.2,372.7 1174.9,375.8 1174,379 1171.6,382.1 1171.8,386.6 1169,389 1169.0,392.7 1166.5,396.7 1165,400 1166.6,402.9 1167.0,406.4 1167.0,409.8 1168.1,413.1 1167.9,417.3 1170,420 1172.2,422.3 1174.6,426.1 1176.9,428.4 1178.5,431.5 1179.7,434.6 1183.6,436.1 1185,440 1188.3,442.4 1191.1,444.0 1192.4,447.9 1194.3,450.1 1197.4,452.9 1200,455 1203.8,453.4 1207.5,453.8 1211.1,453.2 1214.5,452.2 1218.9,451.6 1221.9,450.8 1225.9,450.9 1230,450 1233.9,449.3 1237.5,447.6 1241.2,446.8 1244.5,445.8 1247.4,443.3 1252.3,443.5 1255.3,442.1 1259,441 1259.3,437.4 1260.0,434.0 1261,430 1261.4,425.7 1263.5,421.9 1266.4,419.1 1267.1,416.0 1267.7,410.9 1270,408 1268.9,405.4 1268.8,402.0 1270,399 1271.2,396.2 1273.2,394.3 1274,392 1275.7,388.7 1275.3,385.6 1279.0,383.2 1279,379 1282.6,377.9 1285.0,375.5 1287.9,374.8 1291,373 1294.0,373.6 1297.1,372.7 1300.2,371.0 1303,371 1303.7,368.9 1306,367 1304.2,363.8 1302.4,362.1 1299.5,360.0 1298,357 1300.2,354.3 1302.6,353.6 1306.1,352.1 1308,350 1310.9,347.9 1313.6,348.6 1317.1,349.2 1320,347 1322.5,345.3 1325.5,342.4 1328.4,340.6 1330,338 1332.3,335.6 1333.6,332.3 1337,330 1334.9,326.7 1331.6,324.4 1328,323 1326.1,320.8 1327.4,316.8 1325,314 1322.0,315.9 1318.7,315.0 1316.0,316.7 1313,316 1312.5,318.6 1309.2,320.0 1308,323 1305.1,321.1 1301.5,319.8 1298,318 1295.2,319.6 1291.9,318.5 1289.0,318.4 1286,320 1281.7,320.9 1279.7,324.3 1276,325 1272.6,323.1 1271,320 1267.5,317.8 1265.2,314.4 1262.8,312.5 1259,311 1259.6,307.3 1258.0,304.5 1258,301 1256.5,298.1 1257.0,294.9 1255.3,291.9 1255,289 1253.1,286.3 1251,283" fill="#e0f09c" stroke="rgba(255,255,255,.5)" stroke-width="1.2" stroke-linejoin="round"/>
<polygon points="1185,440 1188.3,442.4 1191.1,444.0 1192.4,447.9 1194.3,450.1 1197.4,452.9 1200,455 1203.8,453.4 1207.5,453.8 1211.1,453.2 1214.5,452.2 1218.9,451.6 1221.9,450.8 1225.9,450.9 1230,450 1233.9,449.3 1237.5,447.6 1241.2,446.8 1244.5,445.8 1247.4,443.3 1252.3,443.5 1255.3,442.1 1259,441 1261.2,443.9 1265.0,445.9 1268.0,447.4 1270.4,449.5 1273.7,452.0 1277,453 1274.1,455.3 1271.4,457.0 1267.5,457.4 1265,459 1266.7,461.7 1268.3,463.6 1269,467 1271.3,470.1 1274.2,471.9 1278.4,472.0 1280.9,474.5 1283.5,477.5 1285.9,479.9 1289,481 1290.3,484.2 1290.8,487.5 1292.2,490.3 1290.8,493.8 1293,497 1294.7,500.2 1293.7,504.3 1296.4,506.4 1297.2,509.6 1297.4,513.4 1297.9,517.3 1300,520 1298.7,523.1 1295.1,525.8 1292.7,528.2 1289.5,529.9 1287.1,531.7 1284.3,534.6 1282.1,537.7 1280,540 1276.1,539.6 1272.7,541.6 1269.2,541.0 1265.3,543.4 1261.3,543.8 1257.2,544.9 1254.0,543.4 1250,545 1247.9,548.2 1244.4,548.8 1241.9,552.3 1239.1,554.1 1236.2,556.6 1232.9,558.1 1230,560 1227.0,562.4 1225.9,566.3 1223.4,569.3 1222.9,572.2 1220.4,575.0 1218.8,579.3 1217.4,582.5 1215,585 1211.1,585.5 1207.9,587.3 1204.6,590.8 1200.2,590.1 1196.7,591.9 1193.4,592.7 1190,595 1186.9,593.9 1182.8,592.8 1179.3,592.3 1175.7,590.9 1172.3,593.0 1168.9,591.5 1165,590 1161.6,587.9 1160.4,584.4 1158.4,581.1 1155.5,579.4 1155.5,575.2 1151.4,574.0 1150,570 1145.9,569.3 1143.0,566.3 1139.5,566.4 1136.7,563.5 1133.9,561.6 1130,560 1127.8,557.5 1125.0,554.8 1122.8,551.6 1121.0,549.0 1117.6,546.9 1114.5,544.9 1112.6,542.5 1110,540 1110.6,536.0 1108.3,532.8 1107.6,529.1 1108.0,525.6 1106.6,522.4 1104.9,518.6 1105,515 1106.0,510.8 1107.8,508.1 1109.4,504.2 1111.3,501.1 1113.7,498.2 1115,495 1118.8,492.9 1121.3,490.4 1124.4,487.6 1126.2,484.0 1128.4,480.2 1132.4,479.0 1134.3,476.0 1136.5,472.4 1140,470 1140.7,467.0 1138.8,463.8 1139.6,460.3 1141.2,456.9 1140.7,453.4 1140,450 1144.4,449.9 1147.9,450.9 1151.6,451.4 1154.4,453.5 1158.9,453.2 1162.4,453.9 1166.3,455.9 1170,455 1171.8,452.0 1175.8,451.1 1177.2,447.2 1180.1,444.5 1181.4,442.1" fill="#5fb0a6" stroke="rgba(255,255,255,.5)" stroke-width="1.2" stroke-linejoin="round"/>
<polygon points="1204,198 1207.5,196.3 1210.9,198.2 1214,196 1216.4,198.3 1219.9,200.0 1224,200 1227.4,202.2 1229.3,204.6 1231,208 1233.7,209.7 1237.3,209.9 1241.3,209.2 1244,211 1247.0,209.5 1250.5,210.8 1252.8,211.7 1256,210 1259.1,209.1 1262.9,207.8 1266,208 1269.3,209.7 1272,213 1272.7,216.3 1271.9,219.5 1270.1,221.9 1269,225 1266.6,227.4 1267.2,231.5 1265,235 1265,235 1263.4,237.8 1259.7,238.8 1258,242 1258.7,245.7 1256.0,248.1 1256,252 1255.2,255.6 1253.2,259.1 1250,262 1252.0,264.5 1250.6,268.1 1251.5,271.3 1253,274 1253.1,276.9 1252.6,279.9 1251,283 1248.4,279.6 1245.0,277.9 1243,275 1239.3,273.3 1237.6,270.9 1233.0,271.1 1230.1,269.4 1227.4,267.8 1224,265.5 1220.4,266.4 1219.0,269.6 1216.3,272.5 1213,274 1211.6,277.5 1211,281 1213.7,284.2 1216.1,286.0 1219,289 1217.9,293.2 1216.0,296.1 1213,298 1213.5,301.6 1212.2,304.4 1212,308 1208.8,310.3 1207,313 1208.5,315.6 1208.6,318.8 1209.6,322.0 1209,325 1208.2,328.2 1208.2,331.9 1207.4,334.4 1208,338 1209.1,340.7 1211,344 1207.5,343.1 1203.3,343.9 1200.5,344.7 1196.8,346.1 1193,346 1189.8,345.3 1186.5,346.6 1182.9,346.4 1179.0,347.8 1176,347 1174.5,350.3 1171,352 1173.0,354.9 1173.4,358.6 1176,362 1177.2,365.0 1176.8,367.6 1179,370 1176.2,372.7 1174.9,375.8 1174,379 1171.6,382.1 1171.8,386.6 1169,389 1164.6,389.8 1162,392 1158.7,391.8 1155.2,390.6 1152.0,392.1 1149,392 1145.7,392.2 1142.6,390.7 1139.8,389.5 1137,389 1135.6,392.3 1133.6,395.0 1130,397 1127.3,394.9 1125.3,393.2 1122,392 1120.6,395.2 1117.4,398.1 1114,399 1111.4,396.4 1111.6,392.7 1110,389 1108.1,386.4 1107.6,383.0 1109.8,379.3 1108,377 1108.6,373.2 1108.0,369.1 1107.4,365.8 1106,362 1107.6,358.5 1106.5,355.3 1108,352 1106.5,348.8 1105.3,346.0 1103,343 1099.8,341.2 1098.3,337.7 1094.4,336.0 1093,333 1094.1,330.8 1093,328 1095.9,325.7 1097.1,322.2 1100,320 1102.6,317.7 1105.1,314.6 1105.5,311.1 1108,308 1109.7,306.1 1110.9,303.4 1113,301 1113.3,297.2 1111.0,293.8 1110.8,291.3 1108.5,288.2 1109,284 1107.9,281.2 1105.0,279.9 1103.5,277.2 1100,276 1097.2,274.0 1094.8,272.3 1091.4,270.8 1090,268 1089.7,264.5 1090.1,262.1 1092,259 1096.3,259.8 1099.7,258.9 1103,258 1106.7,257.6 1110.2,258.5 1113.6,261.4 1117,262 1121.0,263.0 1124.8,261.0 1127.9,261.6 1132,260 1134.7,258.5 1138.0,255.9 1141.9,256.2 1143.6,253.5 1147,252 1149.7,252.8 1153.4,253.0 1155.7,254.4 1159,255 1162.5,256.4 1166.2,256.8 1171.0,257.4 1174,259 1177.1,258.1 1180.9,258.5 1184,260 1185.9,257.4 1188.1,254.6 1191,252 1194.4,249.9 1197,247 1197.7,243.4 1197.5,240.3 1200,237 1201.9,233.5 1202.4,230.0 1204,227 1202.0,224.3 1203.1,221.2 1202,218 1202.1,214.2 1202.6,211.3 1201,208 1203.4,204.8 1202.6,201.3 1204,198" fill="#69adb5" stroke="rgba(255,255,255,.5)" stroke-width="1.2" stroke-linejoin="round"/>
<polygon points="1265,235 1268.2,233.5 1272.9,234.9 1276,234 1279.5,233.7 1282.5,236.1 1286,237 1288.0,240.1 1292.7,241.5 1294.5,244.3 1298,247 1301.3,247.2 1304.9,247.9 1308,249 1310.9,248.3 1314.2,247.8 1316.4,246.8 1320,247 1323.9,246.5 1326.2,243.6 1329.5,243.2 1333,242 1335.3,240.5 1339.6,240.5 1342,239 1343.4,236.1 1346.0,234.9 1347,232 1350.1,231.0 1354.0,233.7 1357,233 1359.8,234.6 1360.5,237.3 1363,239 1362.8,242.6 1360.2,244.9 1359.6,248.6 1360,252 1363.1,254.1 1366.1,255.7 1369,259 1372.8,259.8 1375.6,262.1 1378.2,262.1 1382,263 1384.0,265.4 1386.2,268.0 1388.1,270.2 1391,271 1394.9,272.2 1397.6,274.2 1401,277 1404.0,277.8 1405.1,281.1 1409.3,281.0 1411,284 1414.0,283.2 1416.7,285.7 1419.7,286.6 1423,286 1426.4,286.5 1429.7,288.4 1432.3,291.9 1436,293 1438.5,294.1 1442.3,293.7 1444.9,296.0 1448,296 1450.9,298.7 1455.0,300.4 1456.6,303.9 1460,306 1462.1,308.3 1465.8,309.1 1468.3,312.0 1472,313 1475.5,315.1 1478.9,316.4 1482,318 1481.1,321.9 1480,325 1476.8,326.1 1473.5,325.9 1470,328 1467.1,330.8 1463.4,330.7 1460,333 1458.0,335.7 1454.4,335.6 1453.0,338.4 1450,340 1448.5,342.9 1448.8,347.0 1448,350 1445.1,352.2 1443.1,355.6 1440,357 1439.5,360.7 1442.6,363.2 1441.2,366.7 1443,370 1446.2,372.7 1446.7,376.9 1450,379 1452.9,381.2 1454.3,383.8 1456.7,386.1 1458,389 1458.9,392.9 1461.4,396.5 1464,399 1461.3,400.4 1460.5,404.0 1458,406 1461.4,407.7 1463.7,410.8 1465.8,415.2 1469.1,417.4 1472,420 1473.7,422.7 1476.2,424.5 1476.7,428.1 1480,430 1479.1,433.1 1479.8,437.3 1480.4,440.5 1482.1,443.7 1480.5,447.2 1482,451 1483.0,453.9 1482.9,458.0 1484.0,461.4 1486.8,464.6 1487.9,467.2 1488,471 1487.8,474.2 1488.4,478.4 1488.3,481.4 1490,485 1487.2,487.4 1483.8,488.8 1480.2,490.0 1477.5,494.4 1474,495 1471.0,496.3 1467.8,498.1 1463.6,498.2 1460,499 1456.2,499.4 1453.2,502.3 1449.7,503.0 1447.1,506.7 1443.2,506.5 1440.4,509.4 1436.1,510.7 1432.6,512.4 1430,515 1426.2,515.7 1423.8,518.8 1419.4,520.4 1416.1,521.6 1412.7,523.5 1408.2,524.0 1404.2,523.7 1401.1,526.0 1398.1,528.5 1394.4,530.0 1390.4,529.8 1387.4,533.2 1383.4,534.5 1380,535 1376.2,534.1 1372.2,534.9 1368.2,537.6 1364.3,535.5 1360.2,536.5 1357.1,535.9 1353.1,536.3 1349.7,539.1 1345.6,539.1 1342.0,537.9 1338.0,538.9 1333.7,538.7 1330,540 1326.8,538.1 1323.4,537.3 1320.7,534.7 1318.5,530.8 1314.4,531.1 1312.2,528.2 1308.4,527.0 1304.8,525.0 1302.9,522.0 1300,520 1297.9,517.3 1297.4,513.4 1297.2,509.6 1296.4,506.4 1293.7,504.3 1294.7,500.2 1293,497 1290.8,493.8 1292.2,490.3 1290.8,487.5 1290.3,484.2 1289,481 1285.9,479.9 1283.5,477.5 1280.9,474.5 1278.4,472.0 1274.2,471.9 1271.3,470.1 1269,467 1268.3,463.6 1266.7,461.7 1265,459 1267.5,457.4 1271.4,457.0 1274.1,455.3 1277,453 1280.0,451.0 1283.9,451.2 1286.0,447.4 1289,447 1287.5,444.2 1286.1,440.7 1287.7,436.5 1286.0,433.3 1285,430 1282.6,427.2 1280.8,423.4 1279,420 1282.1,417.8 1284.6,416.3 1288.0,416.6 1291,414 1294.7,414.7 1298.6,416.2 1303.1,417.2 1306.2,417.6 1310,420 1312.9,422.3 1315.4,424.1 1318.9,425.9 1322,428 1324.8,425.2 1328.5,423.9 1331.1,422.3 1334,420 1336.5,416.6 1338.3,413.2 1339.8,410.3 1340,406 1337.1,405.3 1334.1,403.5 1331.7,401.2 1328,401 1324.0,400.4 1321.2,398.7 1316.7,399.3 1313.6,397.4 1310,397 1308.9,394.1 1306.4,392.2 1303.9,389.8 1303,387 1302.7,383.0 1303.4,379.0 1303.4,375.6 1303,372 1303,372 1304.0,369.1 1306,367 1304.2,363.8 1302.4,362.1 1299.5,360.0 1298,357 1300.2,354.3 1302.6,353.6 1306.1,352.1 1308,350 1310.9,347.9 1313.6,348.6 1317.1,349.2 1320,347 1322.5,345.3 1325.5,342.4 1328.4,340.6 1330,338 1332.3,335.6 1333.6,332.3 1337,330 1334.9,326.7 1331.6,324.4 1328,323 1326.1,320.8 1327.4,316.8 1325,314 1322.0,315.9 1318.7,315.0 1316.0,316.7 1313,316 1312.5,318.6 1309.2,320.0 1308,323 1305.1,321.1 1301.5,319.8 1298,318 1295.2,319.6 1291.9,318.5 1289.0,318.4 1286,320 1281.7,320.9 1279.7,324.3 1276,325 1272.6,323.1 1271,320 1267.5,317.8 1265.2,314.4 1262.8,312.5 1259,311 1259.6,307.3 1258.0,304.5 1258,301 1256.5,298.1 1257.0,294.9 1255.3,291.9 1255,289 1253.1,286.3 1251,283 1252.6,279.9 1253.1,276.9 1253,274 1251.5,271.3 1250.6,268.1 1252.0,264.5 1250,262 1253.2,259.1 1255.2,255.6 1256,252 1256.0,248.1 1258.7,245.7 1258,242 1259.7,238.8 1263.4,237.8 1265,235" fill="#f2876a" stroke="rgba(255,255,255,.5)" stroke-width="1.2" stroke-linejoin="round"/>
<polygon points="1303,371 1300.2,371.0 1297.1,372.7 1294.0,373.6 1291,373 1287.9,374.8 1285.0,375.5 1282.6,377.9 1279,379 1279.0,383.2 1275.3,385.6 1275.7,388.7 1274,392 1273.2,394.3 1271.2,396.2 1270,399 1268.8,402.0 1268.9,405.4 1270,408 1267.7,410.9 1267.1,416.0 1266.4,419.1 1263.5,421.9 1261.4,425.7 1261,430 1260.0,434.0 1259.3,437.4 1259,441 1261.2,443.9 1265.0,445.9 1268.0,447.4 1270.4,449.5 1273.7,452.0 1277,453 1280.0,451.0 1283.9,451.2 1286.0,447.4 1289,447 1287.5,444.2 1286.1,440.7 1287.7,436.5 1286.0,433.3 1285,430 1282.6,427.2 1280.8,423.4 1279,420 1282.1,417.8 1284.6,416.3 1288.0,416.6 1291,414 1294.7,414.7 1298.6,416.2 1303.1,417.2 1306.2,417.6 1310,420 1312.9,422.3 1315.4,424.1 1318.9,425.9 1322,428 1324.8,425.2 1328.5,423.9 1331.1,422.3 1334,420 1336.5,416.6 1338.3,413.2 1339.8,410.3 1340,406 1337.1,405.3 1334.1,403.5 1331.7,401.2 1328,401 1324.0,400.4 1321.2,398.7 1316.7,399.3 1313.6,397.4 1310,397 1308.9,394.1 1306.4,392.2 1303.9,389.8 1303,387 1302.7,383.0 1303.4,379.0 1303.4,375.6 1303,372" fill="#d4505f" stroke="rgba(255,255,255,.5)" stroke-width="1.2" stroke-linejoin="round"/>
<polygon points="988,362 990.8,359.2 993.3,356.5 995,354 997.2,352.2 1000.1,351.3 1003.0,349.9 1005,347 1007.2,344.3 1009.9,343.4 1013,343 1015.7,343.4 1019,344 1020.2,346.3 1021.2,348.8 1021,352 1023.0,354.3 1026.8,355.2 1028,358 1030.8,355.9 1032.0,352.5 1034.5,351.1 1037,349 1039.3,347.6 1041,346 1043.6,344.1 1047.7,346.0 1050.9,343.7 1054,344 1057.9,343.5 1060.5,340.8 1064.5,341.1 1067.2,338.0 1071,338 1072.7,335.3 1076.3,335.0 1078,333 1080.8,331.5 1083.6,330.1 1086.6,328.9 1090,328 1090.5,331.3 1093,333 1094.4,336.0 1098.3,337.7 1099.8,341.2 1103,343 1105.3,346.0 1106.5,348.8 1108,352 1106.5,355.3 1107.6,358.5 1106,362 1107.4,365.8 1108.0,369.1 1108.6,373.2 1108,377 1109.8,379.3 1107.6,383.0 1108.1,386.4 1110,389 1108.4,392.4 1109.4,395.9 1107.3,399.0 1107,402 1104.0,401.7 1101.7,399.7 1099,400 1096.2,398.8 1092.4,398.0 1089.1,399.1 1085.2,397.0 1082,398 1078.8,397.0 1075.7,396.1 1073.0,397.5 1070,397 1067.4,395.3 1064.9,393.0 1062.2,391.9 1060,390 1056.8,388.8 1054.5,387.4 1053,385 1049.9,384.9 1046.8,383.8 1044,383 1040.5,384.2 1037,386 1034.6,382.4 1034,379 1031.6,377.8 1029,378 1028.8,381.1 1026.5,382.6 1025,385 1021.8,385.1 1019,383 1017.2,379.9 1014.6,376.8 1013,374 1010.1,374.9 1007.2,374.0 1005,376 1002.3,373.4 998,373 998.8,369.3 1000,366 997.8,367.9 995,369 992.3,367.2 989.9,364.9" fill="#eef6a8" stroke="rgba(255,255,255,.5)" stroke-width="1.2" stroke-linejoin="round"/>
<polygon points="1037,386 1040.5,384.2 1044,383 1046.8,383.8 1049.9,384.9 1053,385 1054.5,387.4 1056.8,388.8 1060,390 1062.2,391.9 1064.9,393.0 1067.4,395.3 1070,397 1073.0,397.5 1075.7,396.1 1078.8,397.0 1082,398 1085.2,397.0 1089.1,399.1 1092.4,398.0 1096.2,398.8 1099,400 1101.7,399.7 1104.0,401.7 1107,402 1106.9,406.0 1108.7,409.9 1109.9,413.5 1108.0,417.2 1109.1,421.4 1110,425 1106.5,427.2 1104.4,429.7 1101.8,431.7 1099.1,434.2 1098.5,438.3 1095,440 1091.3,439.4 1087.5,441.5 1084.5,443.3 1080.9,441.5 1077.0,442.2 1074.0,443.7 1070,445 1067.4,442.2 1063.2,442.2 1059.6,439.6 1056.0,438.7 1054.3,435.5 1050,435 1047.6,432.0 1045.4,428.5 1046.6,424.0 1042.6,421.8 1041.6,418.9 1041,415 1040.2,411.6 1041.2,408.5 1039.4,404.8 1040.8,401.6 1038.7,398.4 1039,395 1038.0,391.9 1037.1,389.3" fill="#cfe9a0" stroke="rgba(255,255,255,.5)" stroke-width="1.2" stroke-linejoin="round"/>
<polygon points="1107,402 1107.3,399.0 1109.4,395.9 1108.4,392.4 1110,389 1111.6,392.7 1111.4,396.4 1114,399 1117.4,398.1 1120.6,395.2 1122,392 1125.3,393.2 1127.3,394.9 1130,397 1133.6,395.0 1135.6,392.3 1137,389 1139.8,389.5 1142.6,390.7 1145.7,392.2 1149,392 1152.0,392.1 1155.2,390.6 1158.7,391.8 1162,392 1164.6,389.8 1169,389 1169.0,392.7 1166.5,396.7 1165,400 1166.6,402.9 1167.0,406.4 1167.0,409.8 1168.1,413.1 1167.9,417.3 1170,420 1172.2,422.3 1174.6,426.1 1176.9,428.4 1178.5,431.5 1179.7,434.6 1183.6,436.1 1185,440 1181.4,442.1 1180.1,444.5 1177.2,447.2 1175.8,451.1 1171.8,452.0 1170,455 1166.3,455.9 1162.4,453.9 1158.9,453.2 1154.4,453.5 1151.6,451.4 1147.9,450.9 1144.4,449.9 1140,450 1136.3,449.8 1132.1,449.8 1129.5,448.2 1126.0,445.7 1122.4,445.8 1118.5,446.1 1115,445 1112.1,442.8 1108.2,443.9 1104.4,442.8 1102.2,440.5 1098.9,440.3 1095,440 1098.5,438.3 1099.1,434.2 1101.8,431.7 1104.4,429.7 1106.5,427.2 1110,425 1109.1,421.4 1108.0,417.2 1109.9,413.5 1108.7,409.9 1106.9,406.0" fill="#cbe8a0" stroke="rgba(255,255,255,.5)" stroke-width="1.2" stroke-linejoin="round"/>
</svg>
<div class="mk" style="left:721.5px;top:75.5px"></div>
<div class="city" style="left:742.5px;top:73px">十堰市</div>
<div class="mk" style="left:706.5px;top:204.5px"></div>
<div class="city" style="left:728.5px;top:203px">神龙架林区</div>
<div class="mk" style="left:917.5px;top:162.5px"></div>
<div class="city" style="left:866.5px;top:161px">襄樊市</div>
<div class="city" style="left:937.5px;top:161px">襄樊市</div>
<div class="mk" style="left:1091.5px;top:209.5px"></div>
<div class="city" style="left:1111.5px;top:208px">随州市</div>
<div class="mk" style="left:925.5px;top:306.5px"></div>
<div class="city" style="left:873.5px;top:282px">荆门市</div>
<div class="city" style="left:944.5px;top:282px">荆门市</div>
<div class="city" style="left:873.5px;top:304px">荆门市</div>
<div class="city" style="left:944.5px;top:304px">荆门市</div>
<div class="mk" style="left:794.5px;top:351.5px"></div>
<div class="city" style="left:814.5px;top:350px">宜昌市</div>
<div class="mk" style="left:1170.5px;top:317.5px"></div>
<div class="city" style="left:1118.5px;top:315px">孝感市</div>
<div class="city" style="left:1189.5px;top:315px">孝感市</div>
<div class="mk" style="left:1062.5px;top:360.5px"></div>
<div class="city" style="left:1082.5px;top:359px">天门市</div>
<div class="mk" style="left:1023.5px;top:392.5px"></div>
<div class="city" style="left:1044.5px;top:390px">潜江市</div>
<div class="mk" style="left:1102.5px;top:399.5px"></div>
<div class="city" style="left:1123.5px;top:397px">仙桃市</div>
<div class="mk" style="left:1304.5px;top:363.5px"></div>
<div class="city" style="left:1324.5px;top:361px">黄州市</div>
<div class="mk" style="left:1283.5px;top:376.5px"></div>
<div class="city" style="left:1231.5px;top:374px">鄂州市</div>
<div class="mk" style="left:925.5px;top:403.0px"></div>
<div class="city" style="left:889.0px;top:401px">荆州</div>
<div class="city" style="left:945.5px;top:401px">荆州</div>
<div class="mk" style="left:537.5px;top:414.5px"></div>
<div class="city" style="left:557.5px;top:413px">恩施市</div>
<div class="mk" style="left:1330.5px;top:418.5px"></div>
<div class="city" style="left:1351.5px;top:416px">黄石市</div>
<div class="mk" style="left:1223.5px;top:471.5px"></div>
<div class="city" style="left:1244.5px;top:470px">咸宁市</div>
<div class="city" style="left:1241px;top:340px">武汉市</div>
<div class="abs" style="left:1216px;top:366px;width:16px;height:16px;border-radius:50%;border:1px solid #c00;background:#fff"></div><div class="abs" style="left:1219px;top:369px;width:10px;height:10px;border-radius:50%;background:#c80000"></div>
<div class="abs" style="left:906px;top:392px;width:64px;height:24px;border:1px solid #245a9c;border-radius:4px"></div>
<svg class="abs" style="left:932px;top:396px" width="14" height="8" viewBox="0 0 14 8"><path d="M1 .5L7 6.5L13 .5" fill="none" stroke="#fdf3d0" stroke-width="1"/></svg>
<svg class="map" width="1876" height="815" viewBox="0 0 1876 815"><polygon points="750,149 937,157 990,250 1047,315.5 1100,223 1250,262 1256,302 1242,335 1162,359 1013,342 942,252 890,241 776,299 786,336.5 698,357 650.5,384 620,353 724.5,258" fill="rgba(30,144,255,.3)" stroke="#1e90ff" stroke-width="2" stroke-linejoin="round"/></svg>
<div class="wm" style="left:56.5px;top:26px">高级开发授权</div>
<div class="wm" style="left:312.5px;top:26px">高级开发授权</div>
<div class="wm" style="left:568.5px;top:26px">高级开发授权</div>
<div class="wm" style="left:824.5px;top:26px">高级开发授权</div>
<div class="wm" style="left:1080.5px;top:26px">高级开发授权</div>
<div class="wm" style="left:1336.5px;top:26px">高级开发授权</div>
<div class="wm" style="left:1592.5px;top:26px">高级开发授权</div>
<div class="wm" style="left:1848.5px;top:26px">高级开发授权</div>
<div class="wm" style="left:56.5px;top:282px">高级开发授权</div>
<div class="wm" style="left:312.5px;top:282px">高级开发授权</div>
<div class="wm" style="left:568.5px;top:282px">高级开发授权</div>
<div class="wm" style="left:824.5px;top:282px">高级开发授权</div>
<div class="wm" style="left:1080.5px;top:282px">高级开发授权</div>
<div class="wm" style="left:1336.5px;top:282px">高级开发授权</div>
<div class="wm" style="left:1592.5px;top:282px">高级开发授权</div>
<div class="wm" style="left:1848.5px;top:282px">高级开发授权</div>
<div class="wm" style="left:56.5px;top:538px">高级开发授权</div>
<div class="wm" style="left:312.5px;top:538px">高级开发授权</div>
<div class="wm" style="left:568.5px;top:538px">高级开发授权</div>
<div class="wm" style="left:824.5px;top:538px">高级开发授权</div>
<div class="wm" style="left:1080.5px;top:538px">高级开发授权</div>
<div class="wm" style="left:1336.5px;top:538px">高级开发授权</div>
<div class="wm" style="left:1592.5px;top:538px">高级开发授权</div>
<div class="wm" style="left:1848.5px;top:538px">高级开发授权</div>
<div class="wm" style="left:56.5px;top:794px">高级开发授权</div>
<div class="wm" style="left:312.5px;top:794px">高级开发授权</div>
<div class="wm" style="left:568.5px;top:794px">高级开发授权</div>
<div class="wm" style="left:824.5px;top:794px">高级开发授权</div>
<div class="wm" style="left:1080.5px;top:794px">高级开发授权</div>
<div class="wm" style="left:1336.5px;top:794px">高级开发授权</div>
<div class="wm" style="left:1592.5px;top:794px">高级开发授权</div>
<div class="wm" style="left:1848.5px;top:794px">高级开发授权</div>
<svg class="abs" style="left:700.0px;top:164.7px" width="20" height="28" viewBox="0 0 20 28"><path d="M10 .5C4.6 .5 .8 4.6 .8 9.6c0 3.400 1.800 6.100 4.300 8.600C7.400 20.500 9.200 23.500 10 27.500c.8-4 2.600-7 4.900-9.300 2.500-2.500 4.300-5.200 4.300-8.600C19.200 4.600 15.400 .5 10 .5z" fill="#2f7cff"/><circle cx="10" cy="9.300" r="3.300" fill="#fff"/></svg>
<svg class="abs" style="left:820.0px;top:149.8px" width="20" height="28" viewBox="0 0 20 28"><path d="M10 .5C4.6 .5 .8 4.6 .8 9.6c0 3.400 1.800 6.100 4.300 8.600C7.400 20.500 9.200 23.500 10 27.500c.8-4 2.600-7 4.900-9.300 2.500-2.500 4.300-5.200 4.300-8.600C19.200 4.600 15.400 .5 10 .5z" fill="#2f7cff"/><circle cx="10" cy="9.300" r="3.300" fill="#fff"/></svg>
<svg class="abs" style="left:772.0px;top:211.7px" width="20" height="28" viewBox="0 0 20 28"><path d="M10 .5C4.6 .5 .8 4.6 .8 9.6c0 3.400 1.800 6.100 4.300 8.600C7.400 20.500 9.200 23.500 10 27.500c.8-4 2.600-7 4.900-9.300 2.500-2.500 4.300-5.200 4.300-8.600C19.200 4.600 15.400 .5 10 .5z" fill="#2f7cff"/><circle cx="10" cy="9.300" r="3.300" fill="#fff"/></svg>
<svg class="abs" style="left:676.0px;top:236.4px" width="20" height="28" viewBox="0 0 20 28"><path d="M10 .5C4.6 .5 .8 4.6 .8 9.6c0 3.400 1.800 6.100 4.300 8.600C7.400 20.500 9.200 23.500 10 27.500c.8-4 2.600-7 4.900-9.300 2.500-2.500 4.300-5.200 4.300-8.600C19.200 4.600 15.400 .5 10 .5z" fill="#2f7cff"/><circle cx="10" cy="9.300" r="3.300" fill="#fff"/></svg>
<svg class="abs" style="left:718.0px;top:271.9px" width="20" height="28" viewBox="0 0 20 28"><path d="M10 .5C4.6 .5 .8 4.6 .8 9.6c0 3.400 1.800 6.100 4.300 8.600C7.400 20.500 9.200 23.500 10 27.500c.8-4 2.600-7 4.900-9.300 2.500-2.500 4.300-5.200 4.300-8.600C19.200 4.600 15.400 .5 10 .5z" fill="#2f7cff"/><circle cx="10" cy="9.300" r="3.300" fill="#fff"/></svg>
<svg class="abs" style="left:836.0px;top:291.9px" width="20" height="28" viewBox="0 0 20 28"><path d="M10 .5C4.6 .5 .8 4.6 .8 9.6c0 3.400 1.800 6.100 4.300 8.600C7.400 20.500 9.200 23.500 10 27.500c.8-4 2.600-7 4.900-9.300 2.500-2.500 4.300-5.200 4.300-8.600C19.200 4.600 15.400 .5 10 .5z" fill="#2f7cff"/><circle cx="10" cy="9.300" r="3.300" fill="#fff"/></svg>
<svg class="abs" style="left:790.7px;top:326.5px" width="20" height="28" viewBox="0 0 20 28"><path d="M10 .5C4.6 .5 .8 4.6 .8 9.6c0 3.400 1.800 6.100 4.300 8.600C7.400 20.500 9.200 23.500 10 27.500c.8-4 2.600-7 4.900-9.300 2.500-2.500 4.300-5.200 4.300-8.600C19.200 4.600 15.400 .5 10 .5z" fill="#2f7cff"/><circle cx="10" cy="9.300" r="3.300" fill="#fff"/></svg>
<svg class="abs" style="left:642.8px;top:352.5px" width="20" height="28" viewBox="0 0 20 28"><path d="M10 .5C4.6 .5 .8 4.6 .8 9.6c0 3.400 1.800 6.100 4.300 8.600C7.400 20.500 9.200 23.500 10 27.500c.8-4 2.600-7 4.900-9.300 2.500-2.500 4.300-5.200 4.300-8.600C19.200 4.600 15.400 .5 10 .5z" fill="#2f7cff"/><circle cx="10" cy="9.300" r="3.300" fill="#fff"/></svg>
<svg class="abs" style="left:605.8px;top:387.7px" width="20" height="28" viewBox="0 0 20 28"><path d="M10 .5C4.6 .5 .8 4.6 .8 9.6c0 3.400 1.800 6.100 4.300 8.600C7.400 20.500 9.200 23.500 10 27.500c.8-4 2.600-7 4.900-9.300 2.500-2.500 4.300-5.200 4.300-8.600C19.200 4.600 15.400 .5 10 .5z" fill="#2f7cff"/><circle cx="10" cy="9.300" r="3.300" fill="#fff"/></svg>
<div class="abs" style="left:684px;top:381px;width:152px;height:30px;background:#3c4650;border:1px solid #232a30;text-shadow:0 0 1px #000;color:#fff;font-size:12px;line-height:13px;font-weight:bold;padding:0;white-space:nowrap">左键单击增加一个顶点，双<br>击完成绘制；</div>
<div class="circ" style="left:1818px;top:493px;width:37px;height:37px"></div>
<div class="circ" style="left:1818px;top:697px"><div class="abs" style="left:11px;top:11px;width:12px;height:12px;border-radius:50%;background:#6d86a6"></div></div>
<div class="abs" style="left:1782px;top:743px;width:70px;height:20px;background:#2a496c;color:#fff;font-size:12px;line-height:22px;padding-left:6px">50 km</div>
<!-- header -->
<div class="hdr">
<svg class="abs" style="left:0;top:0" width="520" height="50" viewBox="0 0 520 50">
<defs>
<radialGradient id="hg" cx="300" cy="40" r="230" gradientUnits="userSpaceOnUse"><stop offset="0" stop-color="#34679c" stop-opacity=".22"/><stop offset="1" stop-color="#34679c" stop-opacity="0"/></radialGradient>
<linearGradient id="hb" x1="0" y1="0" x2="300" y2="0" gradientUnits="userSpaceOnUse"><stop offset="0" stop-color="#2f7fd0" stop-opacity="0"/><stop offset="1" stop-color="#2f7fd0" stop-opacity=".9"/></linearGradient>
</defs>
<polygon points="0,0 367,0 327,50 0,50" fill="url(#hg)"/>
<rect x="0" y="49" width="292" height="1" fill="url(#hb)"/>
<line x1="291" y1="50" x2="331" y2="0" stroke="#2f76c2" stroke-width="1.2" opacity=".9"/>
<line x1="327" y1="50" x2="367" y2="0" stroke="#2f76c2" stroke-width="1" opacity=".75"/>
<line x1="318.500" y1="15.500" x2="323.500" y2="8.500" stroke="#8fc2f2" stroke-width="2"/>
<polygon points="338,50 342,45.500 357,45.500 353.500,50" fill="#1fc9a4"/>
<polygon points="358,50 362,45.500 377,45.500 373.500,50" fill="#2a9ce4"/>
<polygon points="378,50 382,45.500 397,45.500 393.500,50" fill="#7c98bc"/>
<!-- logo -->
<defs><linearGradient id="cr" x1="0" y1="6" x2="0" y2="44" gradientUnits="userSpaceOnUse"><stop offset="0" stop-color="#1cc6f2"/><stop offset=".25" stop-color="#3a7af6"/><stop offset=".55" stop-color="#4a5cf8"/><stop offset=".8" stop-color="#2a9cf0"/><stop offset="1" stop-color="#16e6e8"/></linearGradient>
<linearGradient id="gb" x1="0" y1="9" x2="0" y2="40" gradientUnits="userSpaceOnUse"><stop offset="0" stop-color="#25b4f4"/><stop offset="1" stop-color="#2484e0"/></linearGradient>
<mask id="cm"><circle cx="39.200" cy="24.800" r="17.800" fill="#fff"/><circle cx="36" cy="24.200" r="17" fill="#000"/></mask></defs>
<rect x="18" y="4" width="42" height="42" fill="url(#cr)" mask="url(#cm)"/>
<circle cx="36.700" cy="24.200" r="15" fill="url(#gb)"/>
<g fill="#26405e"><polygon points="34.2,12.3 38.5,11.3 42.8,12.3 44.7,15.3 43.9,18.4 46.0,20.6 44.2,22.8 42.8,24.0 41.0,22.1 38.8,23.3 37.3,25.3 35.6,22.8 33.8,21.6 31.9,21.0 32.5,17.9 31.3,16.1 29.5,17.3 26.6,17.9 25.2,16.1 28.2,14.1 31.3,13.2"/><polygon points="24.3,17.9 26.3,19.0 28.2,20.9 29.5,24.0 28.7,27.0 27.6,29.6 26.6,32.6 24.6,31.4 22.7,27.1 22.2,23.3 22.9,19.8"/><polygon points="46.5,15.3 48.0,16.6 47.4,18.4 45.9,17.8" opacity=".5"/><polygon points="45.9,32.5 48.4,30.7 50.2,29.4 49.9,31.3 47.7,33.1" opacity=".8"/></g>
<circle cx="36.700" cy="24.200" r="14.600" fill="none" stroke="#27a8f0" stroke-width=".9"/>
</svg>
<div class="title" style="top:11.700px">Map Viewer</div>
<svg class="abs" style="left:1829px;top:17px" width="18" height="16" viewBox="0 0 18 16"><path d="M3.450 2.500H7.600L9.100 4.400 10.600 2.500H15V6.650H13V13.500H5.200V6.650H3.450z" fill="none" stroke="#fff" stroke-width="1.300" stroke-linejoin="miter"/></svg>
</div>

<!-- left pill -->
<div class="pill" style="left:22px;top:72px;height:101px">
<div class="act" style="top:14px"></div>
<svg class="abs" style="left:8px;top:23px" width="18" height="18" viewBox="0 0 18 18"><g fill="none" stroke="#19b8d8" stroke-width="1.200" stroke-linejoin="round"><path d="M9 2.500L2 6l7 3.500L16 6z"/><path d="M2 6v5.200L9 14.700l7-3.500V6"/><path d="M2 8.600L9 12.100l7-3.500"/></g></svg>
<svg class="abs" style="left:8px;top:59px" width="18" height="18" viewBox="0 0 18 18"><g fill="none" stroke="#c4cedb" stroke-width="1.100"><path d="M5.500 4.500v-2h11v11h-2"/><rect x="2.500" y="4.500" width="12" height="12"/><path d="M8.500 7.500v6M5.500 10.500h6" stroke-width="1"/></g></svg>
</div>

<!-- layer panel -->
<div class="panel" style="left:79px;top:72px;width:360px;height:128px">
<div class="phead"><div class="cut" style="transform:skewX(-45deg)"></div><div class="gw"></div><div class="ln"></div><div class="t">图层管理</div>
<svg class="abs" style="left:312px;top:12px" width="36" height="12" viewBox="0 0 36 12"><g fill="none" stroke="#fff" stroke-width="1.200"><path d="M1.500 2l4.500 7 4.500-7"/><path d="M24.500 1.500l8.500 9M33 1.500l-8.500 9"/></g></svg>
</div>
<div class="abs" style="left:12px;top:48px;width:335px;height:32px;background:#132e50;border:1px solid #2a62aa;border-radius:6px"></div>
<div class="abs" style="left:315px;top:49px;width:1px;height:30px;background:#2a62aa"></div>
<div class="abs" style="left:24px;top:54px;font-size:14px;line-height:20px;color:#6d8199">搜索图层</div>
<svg class="abs" style="left:323px;top:57px" width="16" height="16" viewBox="0 0 16 16"><g fill="none" stroke="#b9c5d3" stroke-width="1.500"><circle cx="6.500" cy="6.500" r="4.500"/><path d="M10 10l4.500 4.500"/></g></svg>
<svg class="abs" style="left:21.500px;top:96px" width="6" height="8" viewBox="0 0 6 8"><path d="M.5 .5L5 4 .5 7.500z" fill="#fff"/></svg>
<svg class="abs" style="left:40px;top:93px" width="14" height="14" viewBox="0 0 14 14"><rect x=".5" y=".5" width="13" height="13" fill="#2c4a6a" stroke="#858d92" stroke-width="1"/><rect x="1" y="1" width="12" height="1.200" fill="#7d868c"/><path d="M13 1.500L1 10.800M4.200 8.300L9 13" fill="none" stroke="#a0a9b0" stroke-width=".9"/><path d="M4.600 1.300c-1.400 0-2.300 1-2.300 2.200 0 1.500 2.300 3.700 2.300 3.700s2.300-2.200 2.300-3.700c0-1.200-.9-2.200-2.300-2.200z" fill="#1e90ff"/><circle cx="4.600" cy="3.500" r=".8" fill="#dff"/></svg>
<div class="abs b" style="left:58px;top:90px;font-size:14px;line-height:20px;color:#e9edf2">新地图1</div>
<svg class="abs" style="left:306px;top:94px" width="14" height="12" viewBox="0 0 14 12"><path d="M7 1.500C3.800 1.500 1.500 4 .5 6c1 2 3.300 4.500 6.500 4.500S12.500 8 13.500 6C12.500 4 10.200 1.500 7 1.500z" fill="#fff"/><circle cx="7" cy="6" r="2.600" fill="#2a496c"/><circle cx="7" cy="6" r="1.300" fill="#fff"/></svg>
<svg class="abs" style="left:333px;top:94px" width="4" height="12" viewBox="0 0 4 12"><g fill="#fff"><circle cx="2" cy="2" r="1.200"/><circle cx="2" cy="6" r="1.200"/><circle cx="2" cy="10" r="1.200"/></g></svg>
</div>
<!-- query panel -->
<div class="panel" style="left:1437px;top:72px;width:360px;height:173px">
<div class="phead"><div class="cut" style="transform:skewX(-45deg)"></div><div class="gw"></div><div class="ln"></div><div class="t">要素查询</div>
<svg class="abs" style="left:312px;top:12px" width="36" height="12" viewBox="0 0 36 12"><g fill="none" stroke="#fff" stroke-width="1.200"><path d="M1.500 2l4.500 7 4.500-7"/><path d="M24.500 1.500l8.500 9M33 1.500l-8.500 9"/></g></svg>
</div>
<!-- tools -->
<div class="abs" style="left:18.500px;top:59.500px;width:6.500px;height:6.500px;border-radius:50%;background:#e8ecf0"></div>
<svg class="abs" style="left:40px;top:54px" width="20" height="18" viewBox="0 0 20 18"><g fill="none" stroke="#fff" stroke-width="1.200"><circle cx="9" cy="9" r="7.800"/><path d="M9 9h8.500"/></g><circle cx="9" cy="9" r="1.200" fill="#fff"/><path d="M15.500 7l2.500 2-2.500 2z" fill="#fff"/></svg>
<svg class="abs" style="left:69px;top:54px" width="18" height="18" viewBox="0 0 18 18"><rect x="3" y="3" width="12" height="12" fill="none" stroke="#fff" stroke-width="1.300"/><g fill="#fff"><circle cx="3" cy="3" r="1.600"/><circle cx="15" cy="3" r="1.600"/><circle cx="3" cy="15" r="1.600"/><circle cx="15" cy="15" r="1.600"/></g></svg>
<svg class="abs" style="left:97px;top:55px" width="18" height="14" viewBox="0 0 18 14"><path d="M2.400 11.300L6.600 6.600l4.500 3 4.500-4.900" fill="none" stroke="#fff" stroke-width="1.200"/><g fill="#fff"><circle cx="2.400" cy="11.300" r="1.600"/><circle cx="6.600" cy="6.600" r="1.600"/><circle cx="11.100" cy="9.600" r="1.600"/><circle cx="15.600" cy="4.700" r="1.600"/></g></svg>
<svg class="abs" style="left:123px;top:53px" width="21" height="20" viewBox="0 0 21 20"><path d="M9.6 2.8L16.5 5.3L18.8 11.4L15.6 17.5L3.5 17.5L2.8 6.5z" fill="none" stroke="#19b8d8" stroke-width="1.600" stroke-linejoin="round"/><g fill="#19b8d8"><circle cx="9.6" cy="2.8" r="1.300"/><circle cx="16.5" cy="5.3" r="1.300"/><circle cx="18.8" cy="11.4" r="1.300"/><circle cx="15.6" cy="17.5" r="1.300"/><circle cx="3.5" cy="17.5" r="1.300"/><circle cx="2.8" cy="6.5" r="1.300"/></g></svg>
<div class="abs" style="left:114px;top:38px;width:39px;height:44px;border:2px solid #f8140a"></div>
<svg class="abs" style="left:326px;top:55px" width="16" height="16" viewBox="0 0 16 16"><g fill="none" stroke="#fff" stroke-width="1.200"><path d="M6.500 5V1.200h3V5M1.500 5h13v3.500h-13zM2.500 8.500v6h11v-6M6 11.500v3M10 11.500v3"/></g></svg>
<div class="abs" style="left:12px;top:80px;width:336px;height:1px;background:#2a6cae"></div>
<div class="abs m" style="left:12px;top:92px;line-height:20px">保留绘制区域</div>
<div class="abs" style="left:320px;top:95px;width:28px;height:16px;border-radius:8px;background:#08aed2"></div>
<div class="abs" style="left:334px;top:97px;width:12px;height:12px;border-radius:50%;background:#fff"></div>
<div class="abs m" style="left:12px;top:129px;line-height:20px">图层选择模式</div>
<div class="abs" style="left:138px;top:123px;width:210px;height:32px;background:#132e50;border:1px solid #2a62aa;border-radius:6px"></div>
<div class="abs m" style="left:150px;top:129px;line-height:20px">查询全部图层</div>
<svg class="abs" style="left:325px;top:135px" width="12" height="8" viewBox="0 0 12 8"><path d="M1 1l5 5.500L11 1" fill="none" stroke="#5f7898" stroke-width="1.200"/></svg>
</div>

<!-- right toolbar -->
<div class="pill" style="left:1818px;top:72px;height:217px">
<div class="act" style="top:50px"></div>
<svg class="abs" style="left:9.500px;top:24.500px" width="15" height="15" viewBox="0 0 18 18"><g fill="none" stroke="#fff" stroke-width="1.200" stroke-linejoin="round"><path d="M8 7.500l7.500 3-3 1.500 2.500 3-1.500 1-2.500-3-2 2.500z"/><path d="M5.500 1.500v2.500M1.500 5.500H4M2.500 2.500l1.800 1.800M8.500 2.500L7 4"/></g></svg>
<svg class="abs" style="left:9px;top:59.500px" width="16" height="16" viewBox="0 0 18 18"><g fill="none" stroke="#19b8d8" stroke-width="1.200"><path d="M16 9V2H2v10h6M9 12v3.500M4.500 15.500h8M4.500 5h7M4.500 7.500h3.500"/><circle cx="11.500" cy="9" r="2.300"/><path d="M13.200 10.700l2.800 2.800"/></g></svg>
<svg class="abs" style="left:9px;top:96.500px" width="16" height="14.200" viewBox="0 0 18 16"><g fill="none" stroke="#fff" stroke-width="1.200"><path d="M1.500 2.500h5M1.500 6h4M1.500 9.500h4M1.500 13h6"/><circle cx="10.500" cy="7" r="4.300"/><path d="M13.500 10.500l3.500 4"/></g></svg>
<div class="abs" style="left:6px;top:125px;width:24px;height:1px;background:#2b5d9a"></div>
<svg class="abs" style="left:10px;top:140.500px" width="14" height="14" viewBox="0 0 18 18"><g fill="none" stroke="#fff" stroke-width="1.200" stroke-linejoin="round"><path d="M12.500 2.500l3 3L6 15l-3-3z"/><path d="M5 10.500l1.500 1.500"/></g></svg>
<svg class="abs" style="left:10.500px;top:178px" width="13" height="13" viewBox="0 0 16 16"><g fill="none" stroke="#fff" stroke-width="1.200"><path d="M3.500 .5v12h12M.5 3.500h12v12"/></g></svg>
</div>
<div class="circ" style="left:1818px;top:312px"><svg class="abs" style="left:10px;top:10px" width="14" height="14" viewBox="0 0 14 14"><g fill="none" stroke="#fff" stroke-width="1.100" stroke-linejoin="round"><path d="M1 7l6-5.500L13 7M2.500 6v6.500h9V6"/><path d="M5.800 12.500V9.500a1.200 1.200 0 0 1 2.400 0v3"/></g></svg></div>
<div class="pill" style="left:1818px;top:370px;height:100px">
<svg class="abs" style="left:11.500px;top:24.500px" width="11" height="11" viewBox="0 0 13 13"><path d="M6.500 .5v12M.5 6.500h12" stroke="#fff" stroke-width="1.200"/></svg>
<svg class="abs" style="left:11.500px;top:60px" width="11" height="11" viewBox="0 0 13 13"><path d="M.5 6.500h12" stroke="#fff" stroke-width="1.200"/></svg>
</div>
<div class="bot"></div>
<div class="abs" style="left:0;top:408px;width:83px;height:31px;background:#1a3453;border:1px solid #214a80;border-left:none;border-bottom:none;border-radius:5px 5px 0 0;color:#19b6d8;font-size:14px;line-height:31px;padding-left:17px">新地图1</div>
<svg class="abs" style="left:1852px;top:416px" width="13" height="13" viewBox="0 0 13 13"><path d="M1 1l11 11M12 1L1 12" stroke="#fff" stroke-width="1.300" fill="none"/></svg>
<div class="hl" style="top:439px"></div>
<div class="tab" style="left:0px;width:141px">湖北省行政区_GS</div>
<div class="tab" style="left:141px;width:156px">湖北省市级区划_GS</div>
<div class="tab on" style="left:297px;width:154px">湖北省县级区划_GS</div>
<div class="tab" style="left:451px;width:126px">湖北省边界_GS</div>
<div class="tab" style="left:577px;width:99px">武汉市_GS</div>
<div class="tab" style="left:676px;width:141px">湖北省市驻地_GS</div>
<div class="tab" style="left:817px;width:141px">湖北省县驻地_GS</div>
<svg class="abs" style="left:1851px;top:449px" width="15" height="14" viewBox="0 0 15 14"><g fill="none" stroke="#fff" stroke-width="1.200"><path d="M13.500 4V1H1.500v12h12v-3"/><path d="M5.500 7h8.500M11.500 4.500L14 7l-2.500 2.500"/></g></svg>
<div class="hl" style="top:471px"></div>
<div class="abs" style="left:17px;top:476px;line-height:20px;white-space:nowrap;letter-spacing:-.35px">湖北省县级区划_GS（0 已选择）</div>
<div class="sw" style="left:227px;width:72px">范围过滤</div>
<div class="sw" style="left:315px;width:84px">高亮已选择</div>
<svg class="abs" style="left:414px;top:478px" width="14" height="16" viewBox="0 0 14 16"><g fill="none" stroke="#fff" stroke-width="1.200"><path d="M7 1C3.700 1 1.500 3.500 1.500 6.300c0 3.500 5.500 8.700 5.500 8.700s5.500-5.200 5.500-8.700C12.500 3.500 10.300 1 7 1z"/><circle cx="7" cy="6.300" r="2.200"/></g></svg>
<svg class="abs" style="left:441px;top:478px" width="16" height="16" viewBox="0 0 16 16"><g fill="none" stroke="#fff" stroke-width="1.100"><circle cx="8" cy="8" r="7"/><path d="M5.300 5.300l5.400 5.400M10.700 5.300l-5.400 5.400"/></g></svg>
<svg class="abs" style="left:1680px;top:478px" width="16" height="16" viewBox="0 0 16 16"><g fill="none" stroke="#fff" stroke-width="1.200" stroke-linejoin="round"><path d="M1.500 1v13h13M4.500 12V7M7.500 12V4M10.500 12V8M13 12V6"/></g></svg>
<svg class="abs" style="left:1708px;top:478px" width="16" height="16" viewBox="0 0 16 16"><g fill="none" stroke="#fff" stroke-width="1.200" stroke-linejoin="round"><path d="M1.500 2h13l-5 6.500v5h-3v-5zM6.500 11h3"/></g></svg>
<svg class="abs" style="left:1736px;top:478px" width="16" height="16" viewBox="0 0 16 16"><g fill="none" stroke="#fff" stroke-width="1.200" stroke-linejoin="round"><circle cx="8" cy="2.800" r="1.800"/><path d="M8 4.600V9M4 9h8l2 5.500H2zM2.500 12h11"/></g></svg>
<svg class="abs" style="left:1764px;top:478px" width="16" height="16" viewBox="0 0 16 16"><g fill="none" stroke="#fff" stroke-width="1.200" stroke-linejoin="round"><path d="M1.500 8v6h13V8M8 1v9.500M5 7.500l3 3 3-3"/></g></svg>
<svg class="abs" style="left:1792px;top:478px" width="16" height="16" viewBox="0 0 16 16"><g fill="none" stroke="#fff" stroke-width="1.200" stroke-linejoin="round"><path d="M12.800 11.800A6.300 6.300 0 1 0 8 14.300"/><path d="M13.500 8.500v3.800h-3.800"/></g></svg>
<svg class="abs" style="left:1820px;top:478px" width="16" height="16" viewBox="0 0 16 16"><g fill="none" stroke="#fff" stroke-width="1.200" stroke-linejoin="round"><circle cx="8" cy="8" r="2.500"/><path d="M6.700 1.200h2.600l.4 2 1.400.8 1.900-.7 1.300 2.300-1.500 1.300v1.600l1.500 1.300-1.300 2.300-1.900-.7-1.400.8-.4 2H6.700l-.4-2-1.400-.8-1.900.7-1.300-2.300 1.500-1.300V7.900L1.700 6.600 3 4.300l1.900.7 1.400-.8z"/></g></svg>
<svg class="abs" style="left:1848px;top:478px" width="16" height="16" viewBox="0 0 16 16"><g fill="none" stroke="#fff" stroke-width="1.200" stroke-linejoin="round"><path d="M1.500 5.500v-4h4M1.500 1.500L6 6M14.500 5.500v-4h-4M14.500 1.500L10 6M1.500 10.500v4h4M1.500 14.500L6 10M14.500 10.500v4h-4M14.500 14.500L10 10"/></g></svg>
<div class="abs" style="left:0;top:500px;width:1876px;height:29px;background:rgba(24,50,82,.72);border-top:1px solid #24508a;border-radius:5px 5px 0 0"></div>
<div class="th" style="left:50px">FID</div>
<div class="vl" style="left:50px;height:29px"></div>
<div class="vl" style="left:50.0px;top:529px;height:224px"></div>
<div class="th" style="left:310px">面积</div>
<div class="vl" style="left:310px;height:29px"></div>
<div class="vl" style="left:309.8px;top:529px;height:224px"></div>
<div class="th" style="left:570px">周长</div>
<div class="vl" style="left:570px;height:29px"></div>
<div class="vl" style="left:569.5px;top:529px;height:224px"></div>
<div class="th" style="left:830px">图层</div>
<div class="vl" style="left:830px;height:29px"></div>
<div class="vl" style="left:829.3px;top:529px;height:224px"></div>
<div class="th" style="left:1090px;letter-spacing:-1px">CODE</div>
<div class="vl" style="left:1090px;height:29px"></div>
<div class="vl" style="left:1089.1px;top:529px;height:224px"></div>
<div class="th" style="left:1350px">NAME</div>
<div class="vl" style="left:1350px;height:29px"></div>
<div class="vl" style="left:1348.8px;top:529px;height:224px"></div>
<div class="th" style="left:1610px;letter-spacing:-.9px">COLOR_INDEX</div>
<div class="vl" style="left:1610px;height:29px"></div>
<div class="vl" style="left:1608.6px;top:529px;height:224px"></div>
<svg class="srt" style="left:295.5px" viewBox="0 0 9 14"><path d="M4.500 .3L8.700 5H.3zM4.500 13.700L.3 9h8.400z" fill="#657b96"/></svg>
<svg class="srt" style="left:555.5px" viewBox="0 0 9 14"><path d="M4.500 .3L8.700 5H.3zM4.500 13.700L.3 9h8.400z" fill="#657b96"/></svg>
<svg class="srt" style="left:815.5px" viewBox="0 0 9 14"><path d="M4.500 .3L8.700 5H.3zM4.500 13.700L.3 9h8.400z" fill="#657b96"/></svg>
<svg class="srt" style="left:1075.5px" viewBox="0 0 9 14"><path d="M4.500 .3L8.700 5H.3zM4.500 13.700L.3 9h8.400z" fill="#657b96"/></svg>
<svg class="srt" style="left:1335.5px" viewBox="0 0 9 14"><path d="M4.500 .3L8.700 5H.3zM4.500 13.700L.3 9h8.400z" fill="#657b96"/></svg>
<svg class="srt" style="left:1855.5px" viewBox="0 0 9 14"><path d="M4.500 .3L8.700 5H.3zM4.500 13.700L.3 9h8.400z" fill="#657b96"/></svg>
<div class="cb" style="top:507px"></div>
<div class="abs" style="left:0;top:529px;width:1876px;height:224px;overflow:hidden">
<div class="abs" style="left:0;top:0;width:50px;height:224px;background:rgba(18,44,78,.7);border-left:1px solid #24508a"></div>
<div class="hl" style="top:0px"></div>
<div class="cb" style="top:6px"></div>
<div class="td" style="left:50.0px;top:0px">14</div>
<div class="td" style="left:309.8px;top:0px">2669710814.831515</div>
<div class="td" style="left:569.5px;top:0px">340784.0512016601</div>
<div class="td" style="left:829.3px;top:0px">1</div>
<div class="td m" style="left:1348.8px;top:0px;letter-spacing:0;padding-left:5px">建始县</div>
<div class="td" style="left:1608.6px;top:0px">0</div>
<div class="hl" style="top:29px"></div>
<div class="cb" style="top:35px"></div>
<div class="td" style="left:50.0px;top:29px">15</div>
<div class="td" style="left:309.8px;top:29px">3238585372.5653396</div>
<div class="td" style="left:569.5px;top:29px">342346.17711306765</div>
<div class="td" style="left:829.3px;top:29px">1</div>
<div class="td m" style="left:1348.8px;top:29px;letter-spacing:0;padding-left:5px">神农架林区</div>
<div class="td" style="left:1608.6px;top:29px">0</div>
<div class="hl" style="top:58px"></div>
<div class="cb" style="top:64px"></div>
<div class="td" style="left:50.0px;top:58px">26</div>
<div class="td" style="left:309.8px;top:58px">5106943942.053549</div>
<div class="td" style="left:569.5px;top:58px">553042.3305903805</div>
<div class="td" style="left:829.3px;top:58px">1</div>
<div class="td m" style="left:1348.8px;top:58px;letter-spacing:0;padding-left:5px">房县</div>
<div class="td" style="left:1608.6px;top:58px">3</div>
<div class="hl" style="top:87px"></div>
<div class="cb" style="top:93px"></div>
<div class="td" style="left:50.0px;top:87px">37</div>
<div class="td" style="left:309.8px;top:87px">3363023746.7648807</div>
<div class="td" style="left:569.5px;top:87px">417571.12521791976</div>
<div class="td" style="left:829.3px;top:87px">1</div>
<div class="td m" style="left:1348.8px;top:87px;letter-spacing:0;padding-left:5px">巴东县</div>
<div class="td" style="left:1608.6px;top:87px">1</div>
<div class="hl" style="top:116px"></div>
<div class="cb" style="top:122px"></div>
<div class="td" style="left:50.0px;top:116px">39</div>
<div class="td" style="left:309.8px;top:116px">3425335192.973075</div>
<div class="td" style="left:569.5px;top:116px">364946.04481568804</div>
<div class="td" style="left:829.3px;top:116px">1</div>
<div class="td m" style="left:1348.8px;top:116px;letter-spacing:0;padding-left:5px">长阳土家族自治县</div>
<div class="td" style="left:1608.6px;top:116px">2</div>
<div class="hl" style="top:145px"></div>
<div class="cb" style="top:151px"></div>
<div class="td" style="left:50.0px;top:145px">40</div>
<div class="td" style="left:309.8px;top:145px">2348098091.1287265</div>
<div class="td" style="left:569.5px;top:145px">270243.99692118797</div>
<div class="td" style="left:829.3px;top:145px">1</div>
<div class="td m" style="left:1348.8px;top:145px;letter-spacing:0;padding-left:5px">兴山县</div>
<div class="td" style="left:1608.6px;top:145px">3</div>
<div class="hl" style="top:174px"></div>
<div class="cb" style="top:180px"></div>
<div class="td" style="left:50.0px;top:174px">27</div>
<div class="td" style="left:309.8px;top:174px">3247434409.446752</div>
<div class="td" style="left:569.5px;top:174px">369516.58211321366</div>
<div class="td" style="left:829.3px;top:174px">1</div>
<div class="td m" style="left:1348.8px;top:174px;letter-spacing:0;padding-left:5px">保康县</div>
<div class="td" style="left:1608.6px;top:174px">2</div>
<div class="hl" style="top:203px"></div>
<div class="cb" style="top:209px"></div>
<div class="td" style="left:50.0px;top:203px">43</div>
<div class="td" style="left:309.8px;top:203px">4202601940.7629237</div>
<div class="td" style="left:569.5px;top:203px">418737.11403863144</div>
<div class="td" style="left:829.3px;top:203px">1</div>
<div class="td m" style="left:1348.8px;top:203px;letter-spacing:0;padding-left:5px">宜昌市</div>
<div class="td" style="left:1608.6px;top:203px">4</div>
</div>
<div class="abs" style="left:1868.500px;top:529px;width:7.500px;height:224px;background:#1f4b84"></div>
<div class="abs" style="left:1868.500px;top:529px;width:7.500px;height:175px;background:#255c9f;border-radius:0 0 3px 3px"></div>
<div class="abs" style="left:1337px;top:760px;width:200px;text-align:right;line-height:20px;white-space:nowrap">显示1-10条，共有 29条</div>
<svg class="abs" style="left:1552px;top:765px" width="8" height="11" viewBox="0 0 8 11"><path d="M6.500 1L1.500 5.500l5 4.500" fill="none" stroke="#52698a" stroke-width="1.200"/></svg>
<div class="abs" style="left:1569px;top:758px;width:24px;height:24px;border:1px solid #19b6d8;border-radius:5px;background:#163158;color:#19b6d8;text-align:center;line-height:23px">1</div>
<div class="abs" style="left:1593px;top:759px;width:24px;text-align:center;line-height:23px">2</div>
<div class="abs" style="left:1617px;top:759px;width:24px;text-align:center;line-height:23px">3</div>
<svg class="abs" style="left:1649px;top:765px" width="8" height="11" viewBox="0 0 8 11"><path d="M1.500 1l5 4.500-5 4.500" fill="none" stroke="#e8ecf0" stroke-width="1.200"/></svg>
<div class="abs" style="left:1667px;top:758px;width:96px;height:24px;border:1px solid #2a62aa;border-radius:5px;background:#163158;line-height:23px;padding-left:7px">10 / page</div>
<svg class="abs" style="left:1741px;top:767px" width="11" height="7" viewBox="0 0 11 7"><path d="M1 1l4.500 4.500L10 1" fill="none" stroke="#6b8099" stroke-width="1.200"/></svg>
<div class="abs" style="left:1771px;top:761px;line-height:20px">Go to</div>
<div class="abs" style="left:1814px;top:758px;width:44px;height:24px;border:1px solid #2a62aa;border-radius:5px;background:#163158"></div>
<div class="stat">经度:110.3870°，纬度:30.4555°，级别: 3.0000</div>
</div>
</body>
</html>
